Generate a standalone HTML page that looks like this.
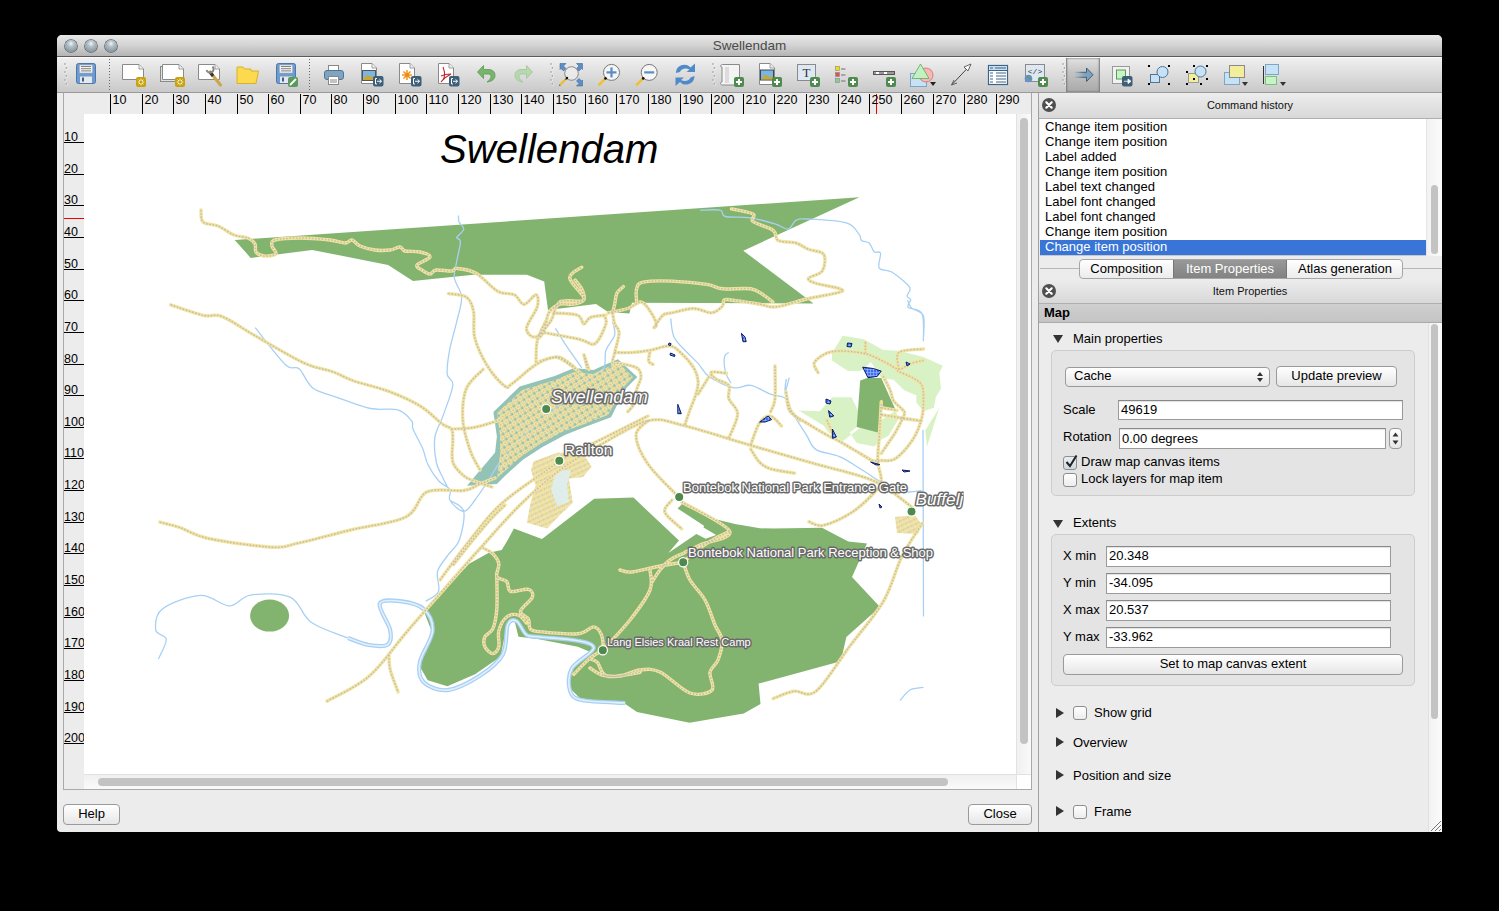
<!DOCTYPE html>
<html><head><meta charset="utf-8">
<style>
*{margin:0;padding:0;box-sizing:border-box}
html,body{width:1499px;height:911px;overflow:hidden;background:#000}
body{position:relative;font-family:"Liberation Sans",sans-serif;font-size:13px;color:#000}
.a{position:absolute}
#win{left:57px;top:35px;width:1385px;height:796px;background:#ececec;border-radius:5px 5px 4px 4px;overflow:hidden}
#title{left:0;top:0;width:1385px;height:22px;background:linear-gradient(#e9e9e9,#d3d3d3 60%,#c2c2c2);border-bottom:1px solid #8f8f8f}
#title span{position:absolute;left:0;width:100%;top:3px;text-align:center;font-size:13.5px;color:#4a4a4a}
.tl{position:absolute;top:4px;width:12px;height:12px;border-radius:50%;background:radial-gradient(circle at 50% 30%,#f2f5f7 0,#b5c1c8 30%,#8a99a3 75%,#6b7a84 100%);box-shadow:0 0 0 0.8px #56616a}
#tb{left:0;top:22px;width:1385px;height:36px;background:linear-gradient(#ececec,#d6d6d6);border-bottom:1px solid #a5a5a5}
.ruler{background:#ececec}
.rt{font-size:12.5px;color:#000;position:absolute;line-height:12px}
.btn{position:absolute;border:1px solid #9a9a9a;border-radius:4px;background:linear-gradient(#fff,#f3f3f3 50%,#e6e6e6);text-align:center;font-size:13px;line-height:18px}
.dtitle{position:absolute;left:1px;width:403px;height:26px;background:linear-gradient(#ededed,#d8d8d8);border-bottom:1px solid #b0b0b0;font-size:11px;text-align:center;line-height:26px;color:#111}
.xcl{position:absolute;left:4px;top:6px;width:14px;height:14px;border-radius:50%;background:#4f4f4f}
.li{position:absolute;left:6px;font-size:13px;line-height:15px;height:15px}
.inp{position:absolute;background:#fff;border:1px solid #9a9a9a;border-top-color:#888;box-shadow:inset 0 1px 1px rgba(0,0,0,.12);font-size:13px;line-height:18px;padding-left:2px}
.lab{position:absolute;font-size:13px;line-height:15px}
.tri-d{position:absolute;width:0;height:0;border-left:5.5px solid transparent;border-right:5.5px solid transparent;border-top:8px solid #333}
.tri-r{position:absolute;width:0;height:0;border-top:5.5px solid transparent;border-bottom:5.5px solid transparent;border-left:8px solid #333}
.cb{position:absolute;width:14px;height:14px;border:1px solid #8e8e8e;border-radius:3px;background:linear-gradient(#fff,#ececec)}
.grp{position:absolute;border:1px solid #cdcdcd;border-radius:5px;background:#e4e4e4}
</style></head><body>
<div class="a" style="left:57px;top:35px;width:1385px;height:797px;background:#ececec;border-radius:5px 5px 4px 4px"></div>
<!-- title bar -->
<div class="a" style="left:57px;top:35px;width:1385px;height:22px;border-radius:5px 5px 0 0;background:linear-gradient(#e8e8e8,#d2d2d2 50%,#b4b4b4);border-bottom:1px solid #5a5a5a"></div>
<div class="a" style="left:57px;top:37px;width:1385px;text-align:center;font-size:13.5px;color:#4a4a4a;line-height:18px">Swellendam</div>
<div class="tl" style="left:65px;top:40px"></div><div class="tl" style="left:85px;top:40px"></div><div class="tl" style="left:105px;top:40px"></div>
<!-- toolbar -->
<div class="a" style="left:57px;top:57px;width:1385px;height:36px;background:linear-gradient(#f0f0f0,#e6e6e6 25%,#c9c9c9);border-top:1px solid #fafafa;border-bottom:1px solid #9a9a9a"></div>
<div class="a" style="left:1066px;top:58px;width:34px;height:34px;background:linear-gradient(#e2e2e2,#c2c2c2 45%,#a9a9a9);box-shadow:inset 1px 0 2px #777,inset -1px 0 2px #777"></div>
<!-- canvas frame -->
<div class="a" style="left:63px;top:93px;width:969px;height:697px;border:1px solid #a9a9a9;border-top:none;background:#ececec"></div>
<div class="a" style="left:84px;top:114px;width:932px;height:660px;background:#fff"></div>
<!-- scrollbars -->
<div class="a" style="left:1016px;top:114px;width:15px;height:660px;background:linear-gradient(90deg,#f0f0f0,#fafafa);border-left:1px solid #e2e2e2"></div>
<div class="a" style="left:1020px;top:118px;width:8px;height:626px;border-radius:4px;background:#c3c3c3"></div>
<div class="a" style="left:84px;top:774px;width:932px;height:15px;background:linear-gradient(#f0f0f0,#fafafa);border-top:1px solid #e2e2e2"></div>
<div class="a" style="left:98px;top:778px;width:850px;height:8px;border-radius:4px;background:#c3c3c3"></div>
<div class="a" style="left:1016px;top:774px;width:15px;height:15px;background:#fff;border-left:1px solid #e2e2e2;border-top:1px solid #e2e2e2"></div>
<!-- red markers -->
<div class="a" style="left:876px;top:94px;width:1px;height:20px;background:#e00"></div>
<div class="a" style="left:64px;top:218px;width:20px;height:1px;background:#e00"></div>
<!-- buttons -->
<div class="btn" style="left:63px;top:804px;width:57px;height:21px">Help</div>
<div class="btn" style="left:968px;top:804px;width:64px;height:21px">Close</div>
<!-- splitter -->
<div class="a" style="left:1038px;top:93px;width:1px;height:739px;background:#a0a0a0"></div>

<div class="a" style="left:110px;top:94px;width:1px;height:20px;background:#000"></div>
<div class="rt" style="left:112.5px;top:94px">10</div>
<div class="a" style="left:142px;top:94px;width:1px;height:20px;background:#000"></div>
<div class="rt" style="left:144.5px;top:94px">20</div>
<div class="a" style="left:173px;top:94px;width:1px;height:20px;background:#000"></div>
<div class="rt" style="left:175.5px;top:94px">30</div>
<div class="a" style="left:205px;top:94px;width:1px;height:20px;background:#000"></div>
<div class="rt" style="left:207.5px;top:94px">40</div>
<div class="a" style="left:237px;top:94px;width:1px;height:20px;background:#000"></div>
<div class="rt" style="left:239.5px;top:94px">50</div>
<div class="a" style="left:268px;top:94px;width:1px;height:20px;background:#000"></div>
<div class="rt" style="left:270.5px;top:94px">60</div>
<div class="a" style="left:300px;top:94px;width:1px;height:20px;background:#000"></div>
<div class="rt" style="left:302.5px;top:94px">70</div>
<div class="a" style="left:331px;top:94px;width:1px;height:20px;background:#000"></div>
<div class="rt" style="left:333.5px;top:94px">80</div>
<div class="a" style="left:363px;top:94px;width:1px;height:20px;background:#000"></div>
<div class="rt" style="left:365.5px;top:94px">90</div>
<div class="a" style="left:395px;top:94px;width:1px;height:20px;background:#000"></div>
<div class="rt" style="left:397.5px;top:94px">100</div>
<div class="a" style="left:426px;top:94px;width:1px;height:20px;background:#000"></div>
<div class="rt" style="left:428.5px;top:94px">110</div>
<div class="a" style="left:458px;top:94px;width:1px;height:20px;background:#000"></div>
<div class="rt" style="left:460.5px;top:94px">120</div>
<div class="a" style="left:490px;top:94px;width:1px;height:20px;background:#000"></div>
<div class="rt" style="left:492.5px;top:94px">130</div>
<div class="a" style="left:521px;top:94px;width:1px;height:20px;background:#000"></div>
<div class="rt" style="left:523.5px;top:94px">140</div>
<div class="a" style="left:553px;top:94px;width:1px;height:20px;background:#000"></div>
<div class="rt" style="left:555.5px;top:94px">150</div>
<div class="a" style="left:585px;top:94px;width:1px;height:20px;background:#000"></div>
<div class="rt" style="left:587.5px;top:94px">160</div>
<div class="a" style="left:616px;top:94px;width:1px;height:20px;background:#000"></div>
<div class="rt" style="left:618.5px;top:94px">170</div>
<div class="a" style="left:648px;top:94px;width:1px;height:20px;background:#000"></div>
<div class="rt" style="left:650.5px;top:94px">180</div>
<div class="a" style="left:680px;top:94px;width:1px;height:20px;background:#000"></div>
<div class="rt" style="left:682.5px;top:94px">190</div>
<div class="a" style="left:711px;top:94px;width:1px;height:20px;background:#000"></div>
<div class="rt" style="left:713.5px;top:94px">200</div>
<div class="a" style="left:743px;top:94px;width:1px;height:20px;background:#000"></div>
<div class="rt" style="left:745.5px;top:94px">210</div>
<div class="a" style="left:774px;top:94px;width:1px;height:20px;background:#000"></div>
<div class="rt" style="left:776.5px;top:94px">220</div>
<div class="a" style="left:806px;top:94px;width:1px;height:20px;background:#000"></div>
<div class="rt" style="left:808.5px;top:94px">230</div>
<div class="a" style="left:838px;top:94px;width:1px;height:20px;background:#000"></div>
<div class="rt" style="left:840.5px;top:94px">240</div>
<div class="a" style="left:869px;top:94px;width:1px;height:20px;background:#000"></div>
<div class="rt" style="left:871.5px;top:94px">250</div>
<div class="a" style="left:901px;top:94px;width:1px;height:20px;background:#000"></div>
<div class="rt" style="left:903.5px;top:94px">260</div>
<div class="a" style="left:933px;top:94px;width:1px;height:20px;background:#000"></div>
<div class="rt" style="left:935.5px;top:94px">270</div>
<div class="a" style="left:964px;top:94px;width:1px;height:20px;background:#000"></div>
<div class="rt" style="left:966.5px;top:94px">280</div>
<div class="a" style="left:996px;top:94px;width:1px;height:20px;background:#000"></div>
<div class="rt" style="left:998.5px;top:94px">290</div>
<div class="a" style="left:63px;top:114px;width:21px;height:660px;overflow:hidden">
<div class="a" style="left:1px;top:28px;width:20px;height:1px;background:#000"></div>
<div class="rt" style="left:1px;top:17px">10</div>
<div class="a" style="left:1px;top:60px;width:20px;height:1px;background:#000"></div>
<div class="rt" style="left:1px;top:49px">20</div>
<div class="a" style="left:1px;top:91px;width:20px;height:1px;background:#000"></div>
<div class="rt" style="left:1px;top:80px">30</div>
<div class="a" style="left:1px;top:123px;width:20px;height:1px;background:#000"></div>
<div class="rt" style="left:1px;top:112px">40</div>
<div class="a" style="left:1px;top:155px;width:20px;height:1px;background:#000"></div>
<div class="rt" style="left:1px;top:144px">50</div>
<div class="a" style="left:1px;top:186px;width:20px;height:1px;background:#000"></div>
<div class="rt" style="left:1px;top:175px">60</div>
<div class="a" style="left:1px;top:218px;width:20px;height:1px;background:#000"></div>
<div class="rt" style="left:1px;top:207px">70</div>
<div class="a" style="left:1px;top:250px;width:20px;height:1px;background:#000"></div>
<div class="rt" style="left:1px;top:239px">80</div>
<div class="a" style="left:1px;top:281px;width:20px;height:1px;background:#000"></div>
<div class="rt" style="left:1px;top:270px">90</div>
<div class="a" style="left:1px;top:313px;width:20px;height:1px;background:#000"></div>
<div class="rt" style="left:1px;top:302px">100</div>
<div class="a" style="left:1px;top:344px;width:20px;height:1px;background:#000"></div>
<div class="rt" style="left:1px;top:333px">110</div>
<div class="a" style="left:1px;top:376px;width:20px;height:1px;background:#000"></div>
<div class="rt" style="left:1px;top:365px">120</div>
<div class="a" style="left:1px;top:408px;width:20px;height:1px;background:#000"></div>
<div class="rt" style="left:1px;top:397px">130</div>
<div class="a" style="left:1px;top:439px;width:20px;height:1px;background:#000"></div>
<div class="rt" style="left:1px;top:428px">140</div>
<div class="a" style="left:1px;top:471px;width:20px;height:1px;background:#000"></div>
<div class="rt" style="left:1px;top:460px">150</div>
<div class="a" style="left:1px;top:503px;width:20px;height:1px;background:#000"></div>
<div class="rt" style="left:1px;top:492px">160</div>
<div class="a" style="left:1px;top:534px;width:20px;height:1px;background:#000"></div>
<div class="rt" style="left:1px;top:523px">170</div>
<div class="a" style="left:1px;top:566px;width:20px;height:1px;background:#000"></div>
<div class="rt" style="left:1px;top:555px">180</div>
<div class="a" style="left:1px;top:598px;width:20px;height:1px;background:#000"></div>
<div class="rt" style="left:1px;top:587px">190</div>
<div class="a" style="left:1px;top:629px;width:20px;height:1px;background:#000"></div>
<div class="rt" style="left:1px;top:618px">200</div>
</div>
<svg class="a" style="left:84px;top:114px" width="932" height="660" viewBox="84 114 932 660">
<defs><pattern id="res" width="6" height="6" patternUnits="userSpaceOnUse" patternTransform="rotate(-32)"><rect x="0" y="0" width="6" height="3.3" fill="#f3e39a"/><rect x="0" y="0" width="3.3" height="6" fill="#f3e39a"/><rect x="1" y="1" width="1.3" height="1.3" fill="#bdbcc0"/><rect x="4.0" y="1" width="1.3" height="1.3" fill="#bdbcc0"/><rect x="1" y="4.0" width="1.3" height="1.3" fill="#bdbcc0"/></pattern></defs>
<path d="M234.7,240.0 L859.4,197.3 L743.3,250.7 L813.5,303.5 L632.0,302.7 L629.4,313.4 L608.0,312.0 L596.0,304.0 L548.0,310.0 L544.2,281.4 L526.9,274.7 L473.5,274.7 L413.0,280.9 L388.1,264.9 L312.1,249.9 L250.7,257.9 Z" fill="#83b46f"/>
<path d="M469.1,563.7 L488.9,552.8 L501.7,549.9 L507.7,540.0 L513.9,528.6 L542.0,539.0 L594.2,498.7 L633.5,497.6 L679.0,540.6 L668.3,552.9 L696.4,534.0 L705.7,538.8 L716.2,534.9 L703.5,527.4 L704.0,525.7 L677.6,508.5 L682.8,503.3 L712.7,518.6 L735.0,524.0 L760.0,528.3 L773.6,528.6 L822.0,527.8 L848.3,541.6 L867.0,543.5 L852.0,577.0 L880.0,607.0 L846.4,636.9 L840.8,661.2 L758.6,683.6 L760.5,704.1 L743.7,713.5 L689.5,722.8 L637.0,711.9 L625.2,704.0 L581.7,700.0 L567.9,686.2 L569.9,670.4 L591.6,652.6 L577.8,646.7 L536.3,638.8 L518.5,636.8 L514.6,621.0 L506.7,624.9 L500.7,656.5 L475.1,674.3 L447.4,686.2 L427.7,680.2 L419.8,666.4 L431.6,630.9 L423.7,611.1 Z" fill="#83b46f"/>
<ellipse cx="269.6" cy="615.6" rx="19.5" ry="16" fill="#83b46f"/>
<path d="M832.0,353.0 L842.7,335.8 L863.8,339.3 L883.1,349.9 L898.9,350.7 L923.5,356.9 L942.8,365.7 L939.3,372.7 L941.0,388.5 L935.8,397.3 L934.0,407.8 L923.5,411.3 L916.4,402.5 L916.4,395.5 L904.2,390.2 L893.6,379.7 L881.3,378.0 L870.8,362.1 L865.5,367.4 L860.2,371.0 L848.0,371.0 L832.0,360.4 Z" fill="#d8f2c6"/><path d="M798.8,410.4 L819.9,411.3 L832.1,397.3 L851.5,397.3 L860.2,414.8 L856.7,427.1 L849.7,432.4 L856.7,442.9 L874.3,446.4 L881.3,439.4 L888.3,435.9 L898.9,418.4 L895.4,411.0 L881.3,420.0 L880.0,432.0 L860.0,428.0 L842.7,441.2 L828.6,432.4 L823.4,425.4 Z" fill="#d8f2c6"/><path d="M939.3,407.8 L925.2,430.6 L927.0,446.4 Z" fill="#d8f2c6"/>
<path d="M860.2,380.6 L867.3,378.0 L881.3,378.0 L888.3,393.8 L895.4,409.6 L881.3,407.8 L877.8,432.4 L856.7,427.1 Z" fill="#83b46f"/>
<path d="M519.7,386.5 L554.8,376.0 L574.1,368.1 L593.5,369.9 L605.7,364.6 L618.0,359.3 L637.3,376.9 L626.8,387.4 L618.0,403.2 L611.0,417.3 L582.9,427.8 L565.4,434.8 L542.5,447.1 L523.2,459.4 L505.7,475.2 L496.9,484.0 L467.0,485.7 L495.1,452.4 L496.9,436.6 L493.4,412.0 Z" fill="#93c3b6"/>
<path d="M158.4,659.0 C159.7,655.7 166.7,644.1 166.3,639.3 C165.9,634.5 156.5,635.1 155.8,630.1 C155.2,625.1 154.9,614.8 162.4,609.0 C169.9,603.2 189.4,595.9 200.6,595.4 C211.8,594.9 221.2,605.9 229.5,605.9 C237.8,605.9 240.5,596.5 250.6,595.1 C260.7,593.7 280.0,592.7 290.1,597.2 C300.2,601.7 301.6,615.4 311.2,622.2 C320.8,629.0 341.9,635.4 348.0,638.0 M450.0,500.5 C452.3,502.3 462.1,504.8 463.7,511.4 C465.2,518.0 462.0,532.6 459.3,540.0 C456.6,547.4 451.0,550.5 447.4,555.8 C443.8,561.1 439.0,565.7 437.5,571.6 C436.0,577.5 440.5,586.5 438.5,591.4 C436.5,596.3 427.8,599.6 425.7,601.2 M255.2,327.6 C260.2,333.8 278.1,357.8 285.4,364.7 C292.7,371.6 294.5,364.9 299.1,368.8 C303.7,372.7 306.4,383.2 312.8,388.0 C319.2,392.8 327.9,394.2 337.5,397.6 C347.1,401.0 360.4,406.4 370.5,408.5 C380.6,410.6 391.0,407.8 397.9,409.9 C404.8,412.0 409.1,417.7 411.6,420.9 C414.1,424.1 411.2,424.5 413.0,429.1 C414.8,433.7 420.1,442.4 422.6,448.3 C425.1,454.2 425.3,459.3 428.0,464.8 C430.7,470.3 435.3,477.1 439.0,481.2 C442.7,485.3 448.2,486.3 450.0,489.5 C451.8,492.7 447.7,496.9 450.0,500.5 C452.3,504.1 459.5,511.5 463.7,511.4 C467.9,511.3 470.6,505.6 475.0,500.0 C479.4,494.4 487.5,481.7 490.0,478.0 M458.5,215.5 C458.6,216.6 458.1,219.8 459.0,222.0 C459.9,224.2 464.0,226.7 463.8,229.0 C463.6,231.3 459.2,234.5 458.0,236.0 C456.8,237.5 456.4,237.0 456.8,238.0 C457.2,239.0 460.4,238.1 460.4,242.0 C460.4,245.9 457.8,255.2 456.8,261.2 C455.8,267.2 453.6,272.0 454.4,278.0 C455.2,284.0 461.2,290.0 461.6,297.2 C462.0,304.4 458.8,312.5 456.8,321.3 C454.8,330.1 451.2,341.3 449.6,350.1 C448.0,358.9 446.7,368.2 447.2,374.1 C447.7,380.0 453.5,378.3 452.8,385.2 C452.1,392.1 446.2,406.7 443.2,415.4 C440.2,424.1 436.0,429.6 434.9,437.4 C433.8,445.2 434.9,455.1 436.3,462.0 C437.7,468.9 441.4,474.4 443.2,478.5 C445.0,482.6 446.6,485.3 447.3,486.7 M555.4,328.3 C557.2,331.2 562.0,339.3 566.4,345.9 C570.8,352.5 579.2,364.1 581.7,367.8 M728.8,352.5 C728.1,353.2 725.0,353.6 724.5,356.9 C724.0,360.2 724.4,367.8 725.5,372.2 C726.6,376.6 730.1,381.4 731.0,383.2 M789.2,377.7 L784.8,394.2 M612.5,321.7 C612.9,323.9 615.8,330.1 614.7,334.9 C613.6,339.7 607.7,344.8 605.9,350.3 C604.1,355.8 606.6,363.1 603.7,367.8 C600.8,372.6 591.6,375.5 588.3,378.8 C585.0,382.1 588.6,383.2 583.9,387.6 C579.2,392.0 569.0,397.9 560.0,405.0 C551.0,412.1 539.2,421.7 530.0,430.0 C520.8,438.3 511.7,447.0 505.0,455.0 C498.3,463.0 492.5,474.2 490.0,478.0 M670.7,318.4 C671.2,321.5 671.6,331.8 674.0,337.1 C676.4,342.4 680.9,345.9 684.9,350.3 C688.9,354.7 694.1,359.0 698.1,363.4 C702.1,367.8 703.2,372.6 709.1,376.6 C715.0,380.6 726.2,386.1 733.2,387.6 C740.2,389.1 744.6,384.3 750.8,385.4 C757.0,386.5 764.8,392.0 770.6,394.2 C776.5,396.4 782.3,395.6 785.9,398.6 C789.5,401.6 788.6,405.9 792.0,412.0 C795.4,418.1 802.5,428.9 806.5,435.2 C810.5,441.5 810.5,446.0 816.1,449.6 C821.7,453.2 832.2,453.3 840.2,456.9 C848.2,460.5 857.0,466.9 864.2,471.3 C871.4,475.7 876.6,479.9 883.4,483.3 C890.2,486.7 898.6,490.5 905.0,491.7 C911.4,492.9 919.0,490.7 921.8,490.5 M786.3,379.0 C786.1,380.8 784.9,386.3 785.0,389.6 C785.1,392.9 786.7,397.4 787.0,399.0 M700.0,210.2 C703.4,210.2 716.0,209.1 720.2,210.2 C724.4,211.2 720.2,215.2 725.2,216.5 C730.2,217.8 742.1,216.5 750.5,217.8 C758.9,219.1 769.4,222.2 775.7,224.1 C782.0,226.0 784.9,229.7 788.3,229.1 C791.7,228.5 792.5,222.0 795.9,220.3 C799.3,218.6 800.1,218.6 808.5,219.0 C816.9,219.4 838.0,220.3 846.4,222.8 C854.8,225.3 856.5,231.2 859.0,234.2 C861.5,237.1 859.8,239.0 861.5,240.5 C863.2,242.0 867.0,241.1 869.1,243.0 C871.2,244.9 872.3,250.1 874.2,251.8 C876.1,253.5 879.7,250.4 880.5,253.1 C881.3,255.8 877.3,265.1 879.2,268.2 C881.1,271.3 886.8,268.8 891.8,272.0 C896.8,275.2 907.0,283.2 909.5,287.2 C912.0,291.2 906.8,293.9 907.0,296.0 C907.2,298.1 910.5,297.9 910.7,299.8 C910.9,301.7 906.3,305.1 908.2,307.4 C910.1,309.7 919.6,308.0 922.1,313.7 C924.6,319.4 923.2,336.8 923.4,341.4 M923.0,430.0 L923.5,616.5 M900.0,700.5 C901.7,698.8 906.1,692.2 910.0,690.0 C913.9,687.8 921.2,687.8 923.5,687.4 M907.5,300.0 C908.2,301.3 908.9,305.3 911.5,307.9 C914.1,310.5 921.3,310.5 923.3,315.8 C925.3,321.1 923.3,335.6 923.3,339.5" fill="none" stroke="#a7d0f5" stroke-width="1.3"/>
<path d="M348.0,638.0 C351.5,639.2 362.4,643.9 369.0,645.0 C375.6,646.1 384.1,647.1 387.6,644.6 C391.1,642.1 391.5,636.9 390.2,630.1 C388.9,623.3 378.1,608.6 379.7,603.8 C381.3,599.0 392.7,600.3 400.0,601.2 C407.3,602.1 418.3,604.2 423.7,609.1 C429.1,614.0 433.2,622.0 432.6,630.9 C432.0,639.8 421.3,654.0 419.8,662.5 C418.3,671.0 419.1,677.6 423.7,682.2 C428.3,686.8 438.2,691.1 447.4,690.1 C456.6,689.1 469.8,682.2 479.0,676.3 C488.2,670.4 497.9,663.1 502.7,654.6 C507.5,646.1 505.4,630.6 507.7,625.0 C510.0,619.4 513.4,619.4 516.5,621.0 C519.6,622.6 522.8,632.2 526.4,634.8 C530.0,637.4 529.7,635.8 538.3,636.8 C546.9,637.8 568.6,638.7 577.8,640.7 C587.0,642.7 594.6,644.0 593.6,648.6 C592.6,653.2 575.9,661.5 571.9,668.4 C567.9,675.3 568.3,684.8 569.9,690.1 C571.5,695.4 572.5,697.9 581.7,700.0 C590.9,702.1 618.0,702.5 625.2,703.0" fill="none" stroke="#a7d0f5" stroke-width="4.2"/><path d="M348.0,638.0 C351.5,639.2 362.4,643.9 369.0,645.0 C375.6,646.1 384.1,647.1 387.6,644.6 C391.1,642.1 391.5,636.9 390.2,630.1 C388.9,623.3 378.1,608.6 379.7,603.8 C381.3,599.0 392.7,600.3 400.0,601.2 C407.3,602.1 418.3,604.2 423.7,609.1 C429.1,614.0 433.2,622.0 432.6,630.9 C432.0,639.8 421.3,654.0 419.8,662.5 C418.3,671.0 419.1,677.6 423.7,682.2 C428.3,686.8 438.2,691.1 447.4,690.1 C456.6,689.1 469.8,682.2 479.0,676.3 C488.2,670.4 497.9,663.1 502.7,654.6 C507.5,646.1 505.4,630.6 507.7,625.0 C510.0,619.4 513.4,619.4 516.5,621.0 C519.6,622.6 522.8,632.2 526.4,634.8 C530.0,637.4 529.7,635.8 538.3,636.8 C546.9,637.8 568.6,638.7 577.8,640.7 C587.0,642.7 594.6,644.0 593.6,648.6 C592.6,653.2 575.9,661.5 571.9,668.4 C567.9,675.3 568.3,684.8 569.9,690.1 C571.5,695.4 572.5,697.9 581.7,700.0 C590.9,702.1 618.0,702.5 625.2,703.0" fill="none" stroke="#e3f0fb" stroke-width="1.6"/>
<defs><pattern id="res2" width="4.6" height="4.6" patternUnits="userSpaceOnUse" patternTransform="rotate(-25)"><rect width="4.6" height="4.6" fill="#dfe6e6"/><rect x="0" y="0" width="4.6" height="3.2" fill="#f3e39a"/><rect x="0" y="0" width="3.2" height="4.6" fill="#f3e39a"/><rect x="1" y="1" width="1.3" height="1.3" fill="#bdbcc0"/><rect x="3.3" y="1" width="1.2" height="1.2" fill="#c8c8c8"/></pattern></defs>
<path d="M522.0,390.0 L555.0,380.0 L574.0,372.0 L593.0,374.0 L606.0,368.0 L618.0,362.0 L633.0,377.0 L624.0,387.0 L615.0,403.0 L608.0,415.0 L582.0,425.0 L562.0,432.0 L540.0,444.0 L522.0,456.0 L506.0,470.0 L497.0,478.0 L500.0,455.0 L500.0,436.0 L497.0,413.0 Z" fill="url(#res)"/>
<path d="M533.7,461.2 L558.3,452.4 L583.0,454.0 L591.7,466.4 L583.0,477.0 L568.9,478.7 L572.8,502.7 L560.0,515.0 L547.0,528.4 L527.0,522.7 L530.0,505.0 L535.6,485.6 L531.0,470.0 Z" fill="url(#res2)"/>
<path d="M895.0,517.0 L915.0,515.0 L922.0,525.0 L918.0,534.0 L897.0,533.0 Z" fill="url(#res2)"/>
<path d="M556,471 L571,470 L567,485 L569,502 L557,506 L551,490 Z" fill="#deeef2" opacity="0.9"/>
<path d="M170.7,304.8 C176.1,306.6 194.5,313.3 203.1,315.3 C211.7,317.3 213.6,313.2 222.3,316.6 C231.0,320.0 241.5,328.0 255.2,335.8 C268.9,343.6 291.8,357.4 304.6,363.3 C317.4,369.2 323.8,368.6 332.0,371.5 C340.2,374.4 344.9,377.8 354.0,381.0 C363.1,384.2 375.9,386.6 386.9,390.7 C397.9,394.8 410.6,400.3 419.8,405.8 C429.0,411.3 436.5,419.7 441.8,423.6 C447.1,427.5 449.6,426.4 451.4,429.1 C453.2,431.8 452.6,434.5 452.8,440.0 C453.0,445.5 451.0,456.0 452.8,462.0 C454.6,468.0 460.1,472.6 463.7,475.8 C467.3,479.0 470.0,479.3 474.7,481.2 C479.4,483.1 489.1,486.0 492.0,487.0 M451.4,429.1 C454.5,428.9 464.6,428.7 470.0,428.0 C475.4,427.3 479.0,426.3 484.0,425.0 C489.0,423.7 497.3,420.8 500.0,420.0 M159.8,522.1 C163.1,523.0 171.4,524.7 179.5,527.4 C187.6,530.1 193.1,535.2 208.5,538.5 C223.9,541.8 256.8,546.4 271.7,547.2 C286.6,548.0 284.8,546.1 298.0,543.2 C311.2,540.3 332.7,534.4 350.7,530.0 C368.7,525.6 393.3,523.2 406.0,516.9 C418.7,510.5 417.3,496.3 427.0,491.9 C436.7,487.5 455.2,491.8 464.0,490.5 C472.8,489.2 474.8,486.1 480.0,484.0 C485.2,481.9 492.5,479.0 495.0,478.0 M327.0,701.2 C334.0,697.0 355.9,687.6 369.1,676.2 C382.3,664.8 393.7,647.1 406.0,632.8 C418.3,618.5 430.6,604.6 442.9,590.6 C455.2,576.6 467.1,562.8 480.0,548.5 C492.9,534.2 506.7,518.1 520.0,505.0 C533.3,491.9 546.7,480.0 560.0,470.0 C573.3,460.0 585.3,453.2 600.0,445.0 C614.7,436.8 634.0,424.0 648.0,420.8 C662.0,417.6 667.2,421.6 684.0,425.6 C700.8,429.6 726.9,438.4 748.9,444.8 C770.9,451.2 795.3,458.1 816.1,464.1 C836.9,470.1 857.8,473.7 873.8,480.9 C889.8,488.1 905.8,502.9 912.2,507.3 M388.9,655.1 C389.1,657.5 388.7,663.5 390.2,669.6 C391.7,675.8 396.8,688.3 398.1,692.0 M440.0,580.0 C445.0,573.3 460.0,552.5 470.0,540.0 C480.0,527.5 488.3,515.8 500.0,505.0 C511.7,494.2 528.3,483.3 540.0,475.0 C551.7,466.7 560.0,460.8 570.0,455.0 C580.0,449.2 587.0,446.5 600.0,440.0 C613.0,433.5 640.0,420.0 648.0,416.0 M201.0,210.0 C201.3,212.0 200.2,219.3 203.0,222.0 C205.8,224.7 212.8,223.8 218.0,226.0 C223.2,228.2 229.0,233.0 234.0,235.0 C239.0,237.0 244.5,236.5 248.0,238.0 C251.5,239.5 253.7,241.7 255.0,244.0 C256.3,246.3 254.5,250.0 256.0,252.0 C257.5,254.0 260.7,255.7 264.0,256.0 C267.3,256.3 274.7,255.7 276.0,254.0 C277.3,252.3 272.2,248.3 272.0,246.0 C271.8,243.7 270.3,241.3 275.0,240.0 C279.7,238.7 290.8,238.0 300.0,238.0 C309.2,238.0 322.5,239.2 330.0,240.0 C337.5,240.8 341.3,243.0 345.0,243.0 C348.7,243.0 349.5,239.5 352.0,240.0 C354.5,240.5 356.2,244.3 360.0,246.0 C363.8,247.7 370.0,249.3 375.0,250.0 C380.0,250.7 385.8,250.5 390.0,250.0 C394.2,249.5 397.5,246.8 400.0,247.0 C402.5,247.2 401.7,250.2 405.0,251.0 C408.3,251.8 415.8,251.0 420.0,252.0 C424.2,253.0 430.5,254.8 430.0,257.0 C429.5,259.2 418.3,262.8 417.0,265.0 C415.7,267.2 419.8,268.5 422.0,270.0 C424.2,271.5 427.7,274.0 430.0,274.0 C432.3,274.0 432.3,270.5 436.0,270.0 C439.7,269.5 448.5,271.3 452.0,271.0 C455.5,270.7 452.8,268.0 456.8,268.4 C460.8,268.8 469.2,269.4 476.0,273.2 C482.8,277.0 491.2,287.6 497.6,291.2 C504.0,294.8 510.0,292.6 514.4,294.8 C518.8,297.0 520.4,304.4 524.0,304.4 C527.6,304.4 533.8,294.4 536.0,294.8 C538.2,295.2 538.9,301.2 537.3,306.8 C535.7,312.4 526.7,323.5 526.5,328.5 C526.3,333.5 532.0,338.1 536.0,336.9 C540.0,335.7 546.5,327.1 550.5,321.3 C554.5,315.5 554.4,305.6 560.0,302.0 C565.6,298.4 582.4,303.6 584.0,299.6 C585.6,295.6 570.1,283.4 569.7,278.0 C569.3,272.6 579.7,269.0 581.7,267.2 M636.6,302.0 C636.6,299.8 635.5,292.1 636.6,288.8 C637.7,285.5 637.3,283.5 643.2,282.2 C649.1,280.9 661.2,280.7 671.8,281.1 C682.4,281.5 698.5,283.1 706.9,284.4 C715.3,285.7 715.0,288.1 722.3,288.8 C729.6,289.5 743.8,287.7 750.8,288.8 C757.8,289.9 760.3,293.2 764.0,295.4 C767.7,297.6 771.3,300.9 772.8,302.0 M608.1,312.9 C611.4,312.2 622.3,310.3 627.8,308.5 C633.3,306.7 637.3,301.6 641.0,302.0 C644.7,302.4 647.2,307.1 649.8,310.7 C652.4,314.3 655.7,321.1 656.4,323.9 C657.1,326.6 653.1,328.7 654.2,327.2 C655.3,325.7 660.1,317.5 663.0,315.1 C665.9,312.7 666.7,314.0 671.8,312.9 C676.9,311.8 687.1,308.5 693.7,308.5 C700.3,308.5 706.5,313.2 711.3,312.9 C716.1,312.5 720.1,308.6 722.3,306.4 C724.5,304.2 722.0,300.7 724.5,299.8 C727.0,298.9 731.8,300.2 737.6,300.9 C743.5,301.6 753.2,303.2 759.6,304.2 C766.0,305.2 768.1,307.8 776.2,306.8 C784.4,305.9 797.9,300.9 808.5,298.5 C819.1,296.1 835.0,293.9 840.0,292.2 C845.0,290.5 842.8,289.9 838.8,288.4 C834.8,286.9 821.1,285.1 816.1,283.4 C811.1,281.7 807.5,280.4 808.5,278.3 C809.5,276.2 819.9,274.8 822.4,270.8 C824.9,266.8 826.0,258.0 823.7,254.4 C821.4,250.8 813.1,251.2 808.5,249.3 C803.9,247.4 800.9,244.5 795.9,243.0 C790.9,241.5 782.0,242.6 778.2,240.5 C774.4,238.4 777.4,233.6 773.2,230.4 C769.0,227.2 756.4,224.2 753.0,221.5 C749.6,218.8 756.6,216.1 753.0,214.0 C749.4,211.9 735.1,209.8 731.5,208.9 M612.5,312.9 C612.9,314.7 613.6,320.6 614.7,323.9 C615.8,327.2 619.1,327.9 619.1,332.7 C619.1,337.5 615.8,347.4 614.7,352.5 C613.6,357.6 611.8,361.6 612.5,363.4 C613.2,365.2 615.1,362.7 619.1,363.4 C623.1,364.1 633.0,365.6 636.6,367.8 C640.2,370.0 641.0,372.9 641.0,376.6 C641.0,380.3 637.7,385.4 636.6,389.8 C635.5,394.2 635.9,399.3 634.4,403.0 C632.9,406.7 628.9,410.3 627.8,411.8 M614.7,352.5 C617.6,352.5 626.4,352.9 632.2,352.5 C638.1,352.1 643.6,351.4 649.8,350.3 C656.0,349.2 664.5,345.5 669.6,345.9 C674.7,346.3 676.5,348.9 680.5,352.5 C684.5,356.1 690.8,363.1 693.7,367.8 C696.6,372.6 697.7,376.6 698.1,381.0 C698.5,385.4 697.4,389.1 695.9,394.2 C694.4,399.3 691.1,406.7 689.3,411.8 C687.5,416.9 685.6,422.7 684.9,424.9 M649.8,352.5 C649.6,353.9 648.2,359.2 648.7,361.2 C649.2,363.2 652.4,363.9 653.1,364.5 M448.4,293.6 C451.4,294.2 462.2,294.2 466.4,297.2 C470.6,300.2 472.2,304.9 473.6,311.7 C475.0,318.5 472.4,328.9 474.8,338.1 C477.2,347.3 483.0,358.9 488.0,366.9 C493.0,374.9 500.8,383.3 504.8,386.1 C508.8,388.9 506.8,387.3 512.0,383.7 C517.2,380.1 528.8,368.9 536.0,364.5 C543.2,360.1 549.7,357.3 555.3,357.3 C560.9,357.3 565.3,361.7 569.7,364.5 C574.1,367.3 579.7,372.5 581.7,374.1 M536.0,362.1 C536.2,358.5 535.7,347.3 537.3,340.5 C538.9,333.7 544.3,324.5 545.7,321.3 M584.0,354.9 L588.9,369.3 M483.2,369.3 C480.4,372.5 469.8,380.1 466.4,388.5 C463.0,396.9 462.2,409.4 462.8,419.7 C463.4,429.9 467.1,441.6 470.0,450.0 C472.9,458.4 478.3,466.7 480.0,470.0 M728.8,438.1 C730.3,434.1 737.6,420.6 737.6,414.0 C737.6,407.4 730.3,403.4 728.8,398.6 C727.3,393.8 731.0,388.7 728.8,385.4 C726.6,382.1 718.6,381.0 715.7,378.8 C712.8,376.6 709.5,373.1 711.3,372.2 C713.1,371.3 724.0,373.1 726.6,373.3 M709.1,376.6 L698.1,394.2 M750.8,444.7 C752.3,441.0 756.3,427.5 759.6,422.7 C762.9,417.9 767.0,415.6 770.6,416.1 C774.2,416.7 779.7,424.4 781.5,426.0 M770.6,411.8 C771.3,409.6 774.3,406.3 775.0,398.6 C775.7,390.9 775.0,371.1 775.0,365.6 M750.8,449.1 C752.3,451.3 756.3,459.0 759.6,462.3 C762.9,465.6 764.8,467.0 770.6,468.8 C776.5,470.6 790.7,472.5 794.7,473.2 M785.9,392.0 C786.6,394.9 787.9,404.9 790.3,409.6 C792.6,414.4 798.4,418.7 800.0,420.5 M575.1,280.0 C576.2,281.5 580.2,285.5 581.7,288.8 C583.2,292.1 585.4,297.2 583.9,299.8 C582.4,302.4 576.9,303.5 572.9,304.2 C568.9,304.9 563.8,302.8 559.8,304.2 C555.8,305.6 551.4,308.5 548.8,312.9 C546.2,317.3 545.9,326.5 544.4,330.5 C542.9,334.5 540.7,336.0 540.0,337.1 M623.4,286.6 C622.3,287.7 618.3,290.3 616.9,293.2 C615.5,296.1 615.4,300.9 614.7,304.2 C614.0,307.5 612.9,311.4 612.5,312.9 M553.2,312.9 C557.2,313.3 572.2,313.3 577.3,315.1 C582.4,316.9 581.7,323.5 583.9,323.9 C586.1,324.3 586.8,318.8 590.5,317.3 C594.2,315.8 603.3,315.5 605.9,315.1 M540.0,361.2 C542.9,360.5 553.2,356.9 557.6,356.9 C562.0,356.9 563.5,359.4 566.4,361.2 C569.3,363.0 573.6,366.7 575.1,367.8 M583.9,354.7 L587.2,367.8 M544.4,332.7 C550.2,333.8 571.1,337.5 579.5,339.3 C587.9,341.1 590.5,346.3 594.9,343.7 C599.3,341.1 604.4,328.7 605.9,323.9 C607.4,319.1 604.1,316.6 603.7,315.1 M648.0,420.8 C646.0,423.2 636.0,428.0 636.0,435.2 C636.0,442.4 640.8,453.7 648.0,464.1 C655.2,474.5 674.1,492.1 679.3,497.7 M672.0,500.0 C670.8,502.0 663.2,507.3 664.8,512.1 C666.4,516.9 678.9,526.1 681.7,528.9 M681.7,502.0 C689.7,506.9 726.7,524.1 729.7,531.3 C732.8,538.5 707.6,541.4 700.0,545.0 C692.4,548.6 689.0,550.4 684.0,552.9 C679.0,555.4 674.0,557.1 670.0,560.0 C666.0,562.9 663.0,566.3 660.0,570.0 C657.0,573.7 653.3,580.0 652.0,582.0 M808.9,521.7 C811.3,522.3 816.1,526.9 823.3,525.3 C830.5,523.7 843.4,517.9 852.2,512.1 C861.0,506.3 871.4,495.9 876.2,490.5 C881.1,485.1 881.0,485.0 881.3,480.0 C881.6,475.0 878.1,468.4 877.8,460.5 C877.5,452.6 879.0,442.2 879.6,432.4 C880.2,422.6 881.0,406.8 881.3,401.7 M786.1,392.0 C786.8,395.2 786.4,406.0 790.0,411.3 C793.6,416.6 801.2,419.5 807.6,423.6 C814.0,427.7 823.3,433.0 828.6,435.9 C833.9,438.8 833.9,438.3 839.2,441.2 C844.5,444.1 854.7,450.3 860.2,453.5 C865.8,456.7 869.0,459.3 872.5,460.5 C876.0,461.7 877.5,460.8 881.3,460.5 C885.1,460.2 890.1,462.2 895.4,458.7 C900.7,455.2 908.5,446.1 912.9,439.4 C917.3,432.7 919.9,425.1 921.7,418.4 C923.5,411.7 923.5,404.6 923.5,399.0 C923.5,393.4 923.5,388.5 921.7,385.0 C919.9,381.5 917.0,380.4 912.9,378.0 C908.8,375.6 899.7,372.1 897.1,370.9 M818.1,372.7 C817.5,370.9 812.3,365.6 814.6,362.1 C816.9,358.6 823.9,353.1 832.1,351.6 C840.3,350.2 855.0,351.6 863.8,353.4 C872.6,355.1 878.9,359.5 884.8,362.1 C890.6,364.7 894.8,368.9 898.9,369.2 C903.0,369.5 905.3,365.4 909.4,363.9 C913.5,362.4 921.1,361.0 923.5,360.4 M898.9,369.2 C898.9,366.4 894.8,355.9 898.9,352.5 C903.0,349.1 919.4,349.6 923.5,349.0 M865.4,342.1 L865.4,352.7 M883.1,376.2 C884.3,378.5 888.4,386.1 890.1,390.2 C891.9,394.3 891.6,397.6 893.6,400.8 C895.6,404.0 900.6,407.3 902.4,409.6 C904.2,411.9 905.4,411.0 904.2,414.8 C903.0,418.6 898.0,427.7 895.4,432.4 C892.8,437.1 890.6,439.5 888.3,443.0 C885.9,446.5 882.5,451.8 881.3,453.5 M881.3,407.8 L897.1,410.4 M881.3,414.8 L921.7,421.0 M826.9,420.1 L833.9,435.9 M900.2,418.4 L920.6,420.8 M922.4,523.2 C919.0,528.8 908.3,543.7 901.8,556.8 C895.3,569.9 891.9,586.7 883.2,601.6 C874.5,616.5 860.8,631.5 849.6,646.4 C838.4,661.3 825.3,683.7 816.0,691.2 C806.7,698.7 800.8,690.0 793.6,691.2 C786.4,692.4 776.4,697.4 773.0,698.6 M683.2,562.2 C686.0,559.8 694.5,552.0 700.0,548.0 C705.5,544.0 711.0,540.8 716.0,538.0 C721.0,535.2 727.4,532.4 729.7,531.3 M683.2,562.2 C679.3,562.8 668.5,564.4 660.0,566.0 C651.5,567.6 638.7,571.3 632.0,572.0 C625.3,572.7 622.0,570.3 620.0,570.0 M650.0,570.0 C650.0,573.3 653.3,581.7 650.0,590.0 C646.7,598.3 637.9,610.0 630.0,620.0 C622.1,630.0 607.3,645.2 602.8,650.3 M683.2,562.2 C684.3,565.2 686.4,573.7 690.0,580.0 C693.6,586.3 700.8,592.5 705.0,600.0 C709.2,607.5 712.2,618.3 715.0,625.0 C717.8,631.7 721.5,634.2 722.0,640.0 C722.5,645.8 720.0,654.7 718.0,660.0 C716.0,665.3 711.0,667.0 710.0,672.0 C709.0,677.0 715.3,686.5 712.0,690.0 C708.7,693.5 698.7,696.0 690.0,693.0 C681.3,690.0 668.3,675.8 660.0,672.0 C651.7,668.2 646.7,669.3 640.0,670.0 C633.3,670.7 626.3,675.2 620.0,676.0 C613.7,676.8 607.0,676.3 602.0,675.0 C597.0,673.7 592.0,669.2 590.0,668.0 M603.5,649.6 C603.2,647.1 603.1,638.6 601.5,634.8 C599.9,631.0 597.6,627.1 593.6,626.9 C589.6,626.7 586.4,633.0 577.8,633.8 C569.2,634.6 550.1,632.7 542.2,631.9 C534.3,631.1 532.7,631.0 530.4,628.9 C528.1,626.8 530.0,622.0 528.4,619.0 C526.8,616.0 519.9,614.7 520.5,611.1 C521.1,607.5 531.0,600.9 532.3,597.3 C533.6,593.7 532.0,590.4 528.4,589.4 C524.8,588.4 514.2,592.7 510.6,591.4 C507.0,590.1 509.0,584.0 506.7,581.5 C504.4,579.0 498.1,579.5 496.8,576.5 C495.5,573.5 499.5,567.5 498.8,563.7 C498.1,559.9 495.4,556.4 492.8,553.8 C490.2,551.2 484.6,548.9 483.0,547.9 M496.8,576.5 C496.8,581.9 497.5,600.4 496.8,609.1 C496.1,617.8 494.8,624.3 492.8,628.9 C490.8,633.5 486.2,633.8 484.9,636.8 C483.6,639.8 483.6,643.9 484.9,646.7 C486.2,649.5 490.5,653.6 492.8,653.6 C495.1,653.6 497.8,650.5 498.8,646.7 C499.8,642.9 497.5,635.9 498.8,630.9 C500.1,625.9 503.4,619.6 506.7,617.0 C510.0,614.4 515.2,614.1 518.5,615.1 C521.8,616.1 525.1,621.7 526.4,623.0 M603.5,649.6 C601.2,651.1 594.6,654.4 589.6,658.5 C584.6,662.6 576.4,671.7 573.8,674.3 M589.6,658.5 C590.9,659.2 594.5,659.5 597.5,662.5 C600.5,665.5 600.3,674.7 607.4,676.3 C614.5,677.9 634.6,673.0 640.0,672.3 M453.3,564.7 C456.6,560.6 466.9,547.5 473.0,540.0 C479.1,532.5 484.7,525.8 490.0,520.0 C495.3,514.2 502.5,507.5 505.0,505.0" fill="none" stroke="#f4e49a" stroke-width="3.4" stroke-linejoin="round" stroke-linecap="round"/>
<path d="M170.7,304.8 C176.1,306.6 194.5,313.3 203.1,315.3 C211.7,317.3 213.6,313.2 222.3,316.6 C231.0,320.0 241.5,328.0 255.2,335.8 C268.9,343.6 291.8,357.4 304.6,363.3 C317.4,369.2 323.8,368.6 332.0,371.5 C340.2,374.4 344.9,377.8 354.0,381.0 C363.1,384.2 375.9,386.6 386.9,390.7 C397.9,394.8 410.6,400.3 419.8,405.8 C429.0,411.3 436.5,419.7 441.8,423.6 C447.1,427.5 449.6,426.4 451.4,429.1 C453.2,431.8 452.6,434.5 452.8,440.0 C453.0,445.5 451.0,456.0 452.8,462.0 C454.6,468.0 460.1,472.6 463.7,475.8 C467.3,479.0 470.0,479.3 474.7,481.2 C479.4,483.1 489.1,486.0 492.0,487.0 M451.4,429.1 C454.5,428.9 464.6,428.7 470.0,428.0 C475.4,427.3 479.0,426.3 484.0,425.0 C489.0,423.7 497.3,420.8 500.0,420.0 M159.8,522.1 C163.1,523.0 171.4,524.7 179.5,527.4 C187.6,530.1 193.1,535.2 208.5,538.5 C223.9,541.8 256.8,546.4 271.7,547.2 C286.6,548.0 284.8,546.1 298.0,543.2 C311.2,540.3 332.7,534.4 350.7,530.0 C368.7,525.6 393.3,523.2 406.0,516.9 C418.7,510.5 417.3,496.3 427.0,491.9 C436.7,487.5 455.2,491.8 464.0,490.5 C472.8,489.2 474.8,486.1 480.0,484.0 C485.2,481.9 492.5,479.0 495.0,478.0 M327.0,701.2 C334.0,697.0 355.9,687.6 369.1,676.2 C382.3,664.8 393.7,647.1 406.0,632.8 C418.3,618.5 430.6,604.6 442.9,590.6 C455.2,576.6 467.1,562.8 480.0,548.5 C492.9,534.2 506.7,518.1 520.0,505.0 C533.3,491.9 546.7,480.0 560.0,470.0 C573.3,460.0 585.3,453.2 600.0,445.0 C614.7,436.8 634.0,424.0 648.0,420.8 C662.0,417.6 667.2,421.6 684.0,425.6 C700.8,429.6 726.9,438.4 748.9,444.8 C770.9,451.2 795.3,458.1 816.1,464.1 C836.9,470.1 857.8,473.7 873.8,480.9 C889.8,488.1 905.8,502.9 912.2,507.3 M388.9,655.1 C389.1,657.5 388.7,663.5 390.2,669.6 C391.7,675.8 396.8,688.3 398.1,692.0 M440.0,580.0 C445.0,573.3 460.0,552.5 470.0,540.0 C480.0,527.5 488.3,515.8 500.0,505.0 C511.7,494.2 528.3,483.3 540.0,475.0 C551.7,466.7 560.0,460.8 570.0,455.0 C580.0,449.2 587.0,446.5 600.0,440.0 C613.0,433.5 640.0,420.0 648.0,416.0 M201.0,210.0 C201.3,212.0 200.2,219.3 203.0,222.0 C205.8,224.7 212.8,223.8 218.0,226.0 C223.2,228.2 229.0,233.0 234.0,235.0 C239.0,237.0 244.5,236.5 248.0,238.0 C251.5,239.5 253.7,241.7 255.0,244.0 C256.3,246.3 254.5,250.0 256.0,252.0 C257.5,254.0 260.7,255.7 264.0,256.0 C267.3,256.3 274.7,255.7 276.0,254.0 C277.3,252.3 272.2,248.3 272.0,246.0 C271.8,243.7 270.3,241.3 275.0,240.0 C279.7,238.7 290.8,238.0 300.0,238.0 C309.2,238.0 322.5,239.2 330.0,240.0 C337.5,240.8 341.3,243.0 345.0,243.0 C348.7,243.0 349.5,239.5 352.0,240.0 C354.5,240.5 356.2,244.3 360.0,246.0 C363.8,247.7 370.0,249.3 375.0,250.0 C380.0,250.7 385.8,250.5 390.0,250.0 C394.2,249.5 397.5,246.8 400.0,247.0 C402.5,247.2 401.7,250.2 405.0,251.0 C408.3,251.8 415.8,251.0 420.0,252.0 C424.2,253.0 430.5,254.8 430.0,257.0 C429.5,259.2 418.3,262.8 417.0,265.0 C415.7,267.2 419.8,268.5 422.0,270.0 C424.2,271.5 427.7,274.0 430.0,274.0 C432.3,274.0 432.3,270.5 436.0,270.0 C439.7,269.5 448.5,271.3 452.0,271.0 C455.5,270.7 452.8,268.0 456.8,268.4 C460.8,268.8 469.2,269.4 476.0,273.2 C482.8,277.0 491.2,287.6 497.6,291.2 C504.0,294.8 510.0,292.6 514.4,294.8 C518.8,297.0 520.4,304.4 524.0,304.4 C527.6,304.4 533.8,294.4 536.0,294.8 C538.2,295.2 538.9,301.2 537.3,306.8 C535.7,312.4 526.7,323.5 526.5,328.5 C526.3,333.5 532.0,338.1 536.0,336.9 C540.0,335.7 546.5,327.1 550.5,321.3 C554.5,315.5 554.4,305.6 560.0,302.0 C565.6,298.4 582.4,303.6 584.0,299.6 C585.6,295.6 570.1,283.4 569.7,278.0 C569.3,272.6 579.7,269.0 581.7,267.2 M636.6,302.0 C636.6,299.8 635.5,292.1 636.6,288.8 C637.7,285.5 637.3,283.5 643.2,282.2 C649.1,280.9 661.2,280.7 671.8,281.1 C682.4,281.5 698.5,283.1 706.9,284.4 C715.3,285.7 715.0,288.1 722.3,288.8 C729.6,289.5 743.8,287.7 750.8,288.8 C757.8,289.9 760.3,293.2 764.0,295.4 C767.7,297.6 771.3,300.9 772.8,302.0 M608.1,312.9 C611.4,312.2 622.3,310.3 627.8,308.5 C633.3,306.7 637.3,301.6 641.0,302.0 C644.7,302.4 647.2,307.1 649.8,310.7 C652.4,314.3 655.7,321.1 656.4,323.9 C657.1,326.6 653.1,328.7 654.2,327.2 C655.3,325.7 660.1,317.5 663.0,315.1 C665.9,312.7 666.7,314.0 671.8,312.9 C676.9,311.8 687.1,308.5 693.7,308.5 C700.3,308.5 706.5,313.2 711.3,312.9 C716.1,312.5 720.1,308.6 722.3,306.4 C724.5,304.2 722.0,300.7 724.5,299.8 C727.0,298.9 731.8,300.2 737.6,300.9 C743.5,301.6 753.2,303.2 759.6,304.2 C766.0,305.2 768.1,307.8 776.2,306.8 C784.4,305.9 797.9,300.9 808.5,298.5 C819.1,296.1 835.0,293.9 840.0,292.2 C845.0,290.5 842.8,289.9 838.8,288.4 C834.8,286.9 821.1,285.1 816.1,283.4 C811.1,281.7 807.5,280.4 808.5,278.3 C809.5,276.2 819.9,274.8 822.4,270.8 C824.9,266.8 826.0,258.0 823.7,254.4 C821.4,250.8 813.1,251.2 808.5,249.3 C803.9,247.4 800.9,244.5 795.9,243.0 C790.9,241.5 782.0,242.6 778.2,240.5 C774.4,238.4 777.4,233.6 773.2,230.4 C769.0,227.2 756.4,224.2 753.0,221.5 C749.6,218.8 756.6,216.1 753.0,214.0 C749.4,211.9 735.1,209.8 731.5,208.9 M612.5,312.9 C612.9,314.7 613.6,320.6 614.7,323.9 C615.8,327.2 619.1,327.9 619.1,332.7 C619.1,337.5 615.8,347.4 614.7,352.5 C613.6,357.6 611.8,361.6 612.5,363.4 C613.2,365.2 615.1,362.7 619.1,363.4 C623.1,364.1 633.0,365.6 636.6,367.8 C640.2,370.0 641.0,372.9 641.0,376.6 C641.0,380.3 637.7,385.4 636.6,389.8 C635.5,394.2 635.9,399.3 634.4,403.0 C632.9,406.7 628.9,410.3 627.8,411.8 M614.7,352.5 C617.6,352.5 626.4,352.9 632.2,352.5 C638.1,352.1 643.6,351.4 649.8,350.3 C656.0,349.2 664.5,345.5 669.6,345.9 C674.7,346.3 676.5,348.9 680.5,352.5 C684.5,356.1 690.8,363.1 693.7,367.8 C696.6,372.6 697.7,376.6 698.1,381.0 C698.5,385.4 697.4,389.1 695.9,394.2 C694.4,399.3 691.1,406.7 689.3,411.8 C687.5,416.9 685.6,422.7 684.9,424.9 M649.8,352.5 C649.6,353.9 648.2,359.2 648.7,361.2 C649.2,363.2 652.4,363.9 653.1,364.5 M448.4,293.6 C451.4,294.2 462.2,294.2 466.4,297.2 C470.6,300.2 472.2,304.9 473.6,311.7 C475.0,318.5 472.4,328.9 474.8,338.1 C477.2,347.3 483.0,358.9 488.0,366.9 C493.0,374.9 500.8,383.3 504.8,386.1 C508.8,388.9 506.8,387.3 512.0,383.7 C517.2,380.1 528.8,368.9 536.0,364.5 C543.2,360.1 549.7,357.3 555.3,357.3 C560.9,357.3 565.3,361.7 569.7,364.5 C574.1,367.3 579.7,372.5 581.7,374.1 M536.0,362.1 C536.2,358.5 535.7,347.3 537.3,340.5 C538.9,333.7 544.3,324.5 545.7,321.3 M584.0,354.9 L588.9,369.3 M483.2,369.3 C480.4,372.5 469.8,380.1 466.4,388.5 C463.0,396.9 462.2,409.4 462.8,419.7 C463.4,429.9 467.1,441.6 470.0,450.0 C472.9,458.4 478.3,466.7 480.0,470.0 M728.8,438.1 C730.3,434.1 737.6,420.6 737.6,414.0 C737.6,407.4 730.3,403.4 728.8,398.6 C727.3,393.8 731.0,388.7 728.8,385.4 C726.6,382.1 718.6,381.0 715.7,378.8 C712.8,376.6 709.5,373.1 711.3,372.2 C713.1,371.3 724.0,373.1 726.6,373.3 M709.1,376.6 L698.1,394.2 M750.8,444.7 C752.3,441.0 756.3,427.5 759.6,422.7 C762.9,417.9 767.0,415.6 770.6,416.1 C774.2,416.7 779.7,424.4 781.5,426.0 M770.6,411.8 C771.3,409.6 774.3,406.3 775.0,398.6 C775.7,390.9 775.0,371.1 775.0,365.6 M750.8,449.1 C752.3,451.3 756.3,459.0 759.6,462.3 C762.9,465.6 764.8,467.0 770.6,468.8 C776.5,470.6 790.7,472.5 794.7,473.2 M785.9,392.0 C786.6,394.9 787.9,404.9 790.3,409.6 C792.6,414.4 798.4,418.7 800.0,420.5 M575.1,280.0 C576.2,281.5 580.2,285.5 581.7,288.8 C583.2,292.1 585.4,297.2 583.9,299.8 C582.4,302.4 576.9,303.5 572.9,304.2 C568.9,304.9 563.8,302.8 559.8,304.2 C555.8,305.6 551.4,308.5 548.8,312.9 C546.2,317.3 545.9,326.5 544.4,330.5 C542.9,334.5 540.7,336.0 540.0,337.1 M623.4,286.6 C622.3,287.7 618.3,290.3 616.9,293.2 C615.5,296.1 615.4,300.9 614.7,304.2 C614.0,307.5 612.9,311.4 612.5,312.9 M553.2,312.9 C557.2,313.3 572.2,313.3 577.3,315.1 C582.4,316.9 581.7,323.5 583.9,323.9 C586.1,324.3 586.8,318.8 590.5,317.3 C594.2,315.8 603.3,315.5 605.9,315.1 M540.0,361.2 C542.9,360.5 553.2,356.9 557.6,356.9 C562.0,356.9 563.5,359.4 566.4,361.2 C569.3,363.0 573.6,366.7 575.1,367.8 M583.9,354.7 L587.2,367.8 M544.4,332.7 C550.2,333.8 571.1,337.5 579.5,339.3 C587.9,341.1 590.5,346.3 594.9,343.7 C599.3,341.1 604.4,328.7 605.9,323.9 C607.4,319.1 604.1,316.6 603.7,315.1 M648.0,420.8 C646.0,423.2 636.0,428.0 636.0,435.2 C636.0,442.4 640.8,453.7 648.0,464.1 C655.2,474.5 674.1,492.1 679.3,497.7 M672.0,500.0 C670.8,502.0 663.2,507.3 664.8,512.1 C666.4,516.9 678.9,526.1 681.7,528.9 M681.7,502.0 C689.7,506.9 726.7,524.1 729.7,531.3 C732.8,538.5 707.6,541.4 700.0,545.0 C692.4,548.6 689.0,550.4 684.0,552.9 C679.0,555.4 674.0,557.1 670.0,560.0 C666.0,562.9 663.0,566.3 660.0,570.0 C657.0,573.7 653.3,580.0 652.0,582.0 M808.9,521.7 C811.3,522.3 816.1,526.9 823.3,525.3 C830.5,523.7 843.4,517.9 852.2,512.1 C861.0,506.3 871.4,495.9 876.2,490.5 C881.1,485.1 881.0,485.0 881.3,480.0 C881.6,475.0 878.1,468.4 877.8,460.5 C877.5,452.6 879.0,442.2 879.6,432.4 C880.2,422.6 881.0,406.8 881.3,401.7 M786.1,392.0 C786.8,395.2 786.4,406.0 790.0,411.3 C793.6,416.6 801.2,419.5 807.6,423.6 C814.0,427.7 823.3,433.0 828.6,435.9 C833.9,438.8 833.9,438.3 839.2,441.2 C844.5,444.1 854.7,450.3 860.2,453.5 C865.8,456.7 869.0,459.3 872.5,460.5 C876.0,461.7 877.5,460.8 881.3,460.5 C885.1,460.2 890.1,462.2 895.4,458.7 C900.7,455.2 908.5,446.1 912.9,439.4 C917.3,432.7 919.9,425.1 921.7,418.4 C923.5,411.7 923.5,404.6 923.5,399.0 C923.5,393.4 923.5,388.5 921.7,385.0 C919.9,381.5 917.0,380.4 912.9,378.0 C908.8,375.6 899.7,372.1 897.1,370.9 M818.1,372.7 C817.5,370.9 812.3,365.6 814.6,362.1 C816.9,358.6 823.9,353.1 832.1,351.6 C840.3,350.2 855.0,351.6 863.8,353.4 C872.6,355.1 878.9,359.5 884.8,362.1 C890.6,364.7 894.8,368.9 898.9,369.2 C903.0,369.5 905.3,365.4 909.4,363.9 C913.5,362.4 921.1,361.0 923.5,360.4 M898.9,369.2 C898.9,366.4 894.8,355.9 898.9,352.5 C903.0,349.1 919.4,349.6 923.5,349.0 M865.4,342.1 L865.4,352.7 M883.1,376.2 C884.3,378.5 888.4,386.1 890.1,390.2 C891.9,394.3 891.6,397.6 893.6,400.8 C895.6,404.0 900.6,407.3 902.4,409.6 C904.2,411.9 905.4,411.0 904.2,414.8 C903.0,418.6 898.0,427.7 895.4,432.4 C892.8,437.1 890.6,439.5 888.3,443.0 C885.9,446.5 882.5,451.8 881.3,453.5 M881.3,407.8 L897.1,410.4 M881.3,414.8 L921.7,421.0 M826.9,420.1 L833.9,435.9 M900.2,418.4 L920.6,420.8 M922.4,523.2 C919.0,528.8 908.3,543.7 901.8,556.8 C895.3,569.9 891.9,586.7 883.2,601.6 C874.5,616.5 860.8,631.5 849.6,646.4 C838.4,661.3 825.3,683.7 816.0,691.2 C806.7,698.7 800.8,690.0 793.6,691.2 C786.4,692.4 776.4,697.4 773.0,698.6 M683.2,562.2 C686.0,559.8 694.5,552.0 700.0,548.0 C705.5,544.0 711.0,540.8 716.0,538.0 C721.0,535.2 727.4,532.4 729.7,531.3 M683.2,562.2 C679.3,562.8 668.5,564.4 660.0,566.0 C651.5,567.6 638.7,571.3 632.0,572.0 C625.3,572.7 622.0,570.3 620.0,570.0 M650.0,570.0 C650.0,573.3 653.3,581.7 650.0,590.0 C646.7,598.3 637.9,610.0 630.0,620.0 C622.1,630.0 607.3,645.2 602.8,650.3 M683.2,562.2 C684.3,565.2 686.4,573.7 690.0,580.0 C693.6,586.3 700.8,592.5 705.0,600.0 C709.2,607.5 712.2,618.3 715.0,625.0 C717.8,631.7 721.5,634.2 722.0,640.0 C722.5,645.8 720.0,654.7 718.0,660.0 C716.0,665.3 711.0,667.0 710.0,672.0 C709.0,677.0 715.3,686.5 712.0,690.0 C708.7,693.5 698.7,696.0 690.0,693.0 C681.3,690.0 668.3,675.8 660.0,672.0 C651.7,668.2 646.7,669.3 640.0,670.0 C633.3,670.7 626.3,675.2 620.0,676.0 C613.7,676.8 607.0,676.3 602.0,675.0 C597.0,673.7 592.0,669.2 590.0,668.0 M603.5,649.6 C603.2,647.1 603.1,638.6 601.5,634.8 C599.9,631.0 597.6,627.1 593.6,626.9 C589.6,626.7 586.4,633.0 577.8,633.8 C569.2,634.6 550.1,632.7 542.2,631.9 C534.3,631.1 532.7,631.0 530.4,628.9 C528.1,626.8 530.0,622.0 528.4,619.0 C526.8,616.0 519.9,614.7 520.5,611.1 C521.1,607.5 531.0,600.9 532.3,597.3 C533.6,593.7 532.0,590.4 528.4,589.4 C524.8,588.4 514.2,592.7 510.6,591.4 C507.0,590.1 509.0,584.0 506.7,581.5 C504.4,579.0 498.1,579.5 496.8,576.5 C495.5,573.5 499.5,567.5 498.8,563.7 C498.1,559.9 495.4,556.4 492.8,553.8 C490.2,551.2 484.6,548.9 483.0,547.9 M496.8,576.5 C496.8,581.9 497.5,600.4 496.8,609.1 C496.1,617.8 494.8,624.3 492.8,628.9 C490.8,633.5 486.2,633.8 484.9,636.8 C483.6,639.8 483.6,643.9 484.9,646.7 C486.2,649.5 490.5,653.6 492.8,653.6 C495.1,653.6 497.8,650.5 498.8,646.7 C499.8,642.9 497.5,635.9 498.8,630.9 C500.1,625.9 503.4,619.6 506.7,617.0 C510.0,614.4 515.2,614.1 518.5,615.1 C521.8,616.1 525.1,621.7 526.4,623.0 M603.5,649.6 C601.2,651.1 594.6,654.4 589.6,658.5 C584.6,662.6 576.4,671.7 573.8,674.3 M589.6,658.5 C590.9,659.2 594.5,659.5 597.5,662.5 C600.5,665.5 600.3,674.7 607.4,676.3 C614.5,677.9 634.6,673.0 640.0,672.3 M453.3,564.7 C456.6,560.6 466.9,547.5 473.0,540.0 C479.1,532.5 484.7,525.8 490.0,520.0 C495.3,514.2 502.5,507.5 505.0,505.0" fill="none" stroke="#bdbcc0" stroke-width="1.5" stroke-dasharray="1.6 1.6"/>
<defs><pattern id="wp" width="3" height="3" patternUnits="userSpaceOnUse"><rect width="3" height="3" fill="#3f6ff0"/><path d="M0,0.5 H3 M0.5,0 V3" stroke="#9fc0ff" stroke-width="0.6"/></pattern></defs>
<path d="M862.7,367.2 L873.3,368.5 L881.2,371.1 L877.2,376.4 L868.0,377.7 Z" fill="url(#wp)" stroke="#0a1a60" stroke-width="1" stroke-linejoin="round"/>
<path d="M741.4,333.3 L745.0,336.9 L746.2,341.7 L743.0,341.7 Z" fill="url(#wp)" stroke="#0a1a60" stroke-width="1" stroke-linejoin="round"/>
<path d="M677.8,404.3 L681.3,413.7 L677.8,413.7 Z" fill="url(#wp)" stroke="#0a1a60" stroke-width="1" stroke-linejoin="round"/>
<path d="M669.0,343.0 L671.0,343.5 L670.5,345.5 L668.5,345.0 Z" fill="url(#wp)" stroke="#0a1a60" stroke-width="1" stroke-linejoin="round"/>
<path d="M670.5,353.0 L675.0,355.0 L674.5,356.5 L670.0,355.0 Z" fill="url(#wp)" stroke="#0a1a60" stroke-width="1" stroke-linejoin="round"/>
<path d="M826.0,399.0 L831.0,401.0 L830.0,404.0 L826.0,403.0 Z" fill="url(#wp)" stroke="#0a1a60" stroke-width="1" stroke-linejoin="round"/>
<path d="M828.5,410.6 L833.8,415.9 L829.8,417.2 Z" fill="url(#wp)" stroke="#0a1a60" stroke-width="1" stroke-linejoin="round"/>
<path d="M832.4,429.1 L836.4,437.0 L832.4,438.3 Z" fill="url(#wp)" stroke="#0a1a60" stroke-width="1" stroke-linejoin="round"/>
<path d="M759.7,422.0 L768.1,416.0 L771.7,419.6 L765.0,422.0 Z" fill="url(#wp)" stroke="#0a1a60" stroke-width="1" stroke-linejoin="round"/>
<path d="M906.0,362.0 L910.0,364.0 L907.0,366.0 Z" fill="url(#wp)" stroke="#0a1a60" stroke-width="1" stroke-linejoin="round"/>
<path d="M870.6,462.0 L879.9,464.6 L876.0,465.0 Z" fill="url(#wp)" stroke="#0a1a60" stroke-width="1" stroke-linejoin="round"/>
<path d="M902.0,470.0 L910.0,471.0 L904.0,472.0 Z" fill="url(#wp)" stroke="#0a1a60" stroke-width="1" stroke-linejoin="round"/>
<path d="M879.0,504.0 L882.0,507.0 L880.0,508.0 Z" fill="url(#wp)" stroke="#0a1a60" stroke-width="1" stroke-linejoin="round"/>
<path d="M847.5,343.0 L852.0,343.5 L851.0,347.0 L847.0,346.5 Z" fill="url(#wp)" stroke="#0a1a60" stroke-width="1" stroke-linejoin="round"/>
<text x="551" y="403" font-size="17.8" font-style="italic" font-family="Liberation Sans" fill="#fff" stroke="#6a6a6a" stroke-width="3" paint-order="stroke" stroke-linejoin="round">Swellendam</text>
<text x="564" y="455" font-size="15.5" font-family="Liberation Sans" fill="#fff" stroke="#6a6a6a" stroke-width="3" paint-order="stroke" stroke-linejoin="round">Railton</text>
<text x="683" y="492" font-size="13" font-family="Liberation Sans" fill="#fff" stroke="#6a6a6a" stroke-width="3" paint-order="stroke" stroke-linejoin="round">Bontebok National Park Entrance Gate</text>
<text x="688" y="557" font-size="13" font-family="Liberation Sans" fill="#fff" stroke="#6a6a6a" stroke-width="3" paint-order="stroke" stroke-linejoin="round">Bontebok National Park Reception &amp; Shop</text>
<text x="607" y="646" font-size="11" font-family="Liberation Sans" fill="#fff" stroke="#6a6a6a" stroke-width="3" paint-order="stroke" stroke-linejoin="round">Lang Elsies Kraal Rest Camp</text>
<clipPath id="mclip"><rect x="84" y="114" width="879.7" height="660"/></clipPath>
<text x="915.5" y="504.6" font-size="17.2" font-style="italic" clip-path="url(#mclip)" font-family="Liberation Sans" fill="#fff" stroke="#6a6a6a" stroke-width="3" paint-order="stroke" stroke-linejoin="round">Buffelj</text>
<circle cx="546.2" cy="409" r="4.6" fill="#4e8a4e" stroke="#fff" stroke-width="1.2"/>
<circle cx="559.3" cy="460.7" r="4.6" fill="#4e8a4e" stroke="#fff" stroke-width="1.2"/>
<circle cx="679.2" cy="497" r="4.6" fill="#4e8a4e" stroke="#fff" stroke-width="1.2"/>
<circle cx="683.2" cy="562.2" r="4.6" fill="#4e8a4e" stroke="#fff" stroke-width="1.2"/>
<circle cx="602.8" cy="650.3" r="4.6" fill="#4e8a4e" stroke="#fff" stroke-width="1.2"/>
<circle cx="911.5" cy="511.6" r="4.6" fill="#4e8a4e" stroke="#fff" stroke-width="1.2"/>
<text x="440" y="163" font-family="Liberation Sans" font-size="40" font-style="italic" fill="#000" textLength="218.5" lengthAdjust="spacingAndGlyphs">Swellendam</text>
</svg>
<svg class="a" style="left:57px;top:57px" width="1385" height="36" viewBox="57 57 1385 36">
<circle cx="65.4" cy="64.4" r="1.1" fill="#fff"/><circle cx="65" cy="64" r="0.9" fill="#a8a8a8"/>
<circle cx="66.9" cy="68.4" r="1.1" fill="#fff"/><circle cx="66.5" cy="68" r="0.9" fill="#a8a8a8"/>
<circle cx="65.4" cy="72.4" r="1.1" fill="#fff"/><circle cx="65" cy="72" r="0.9" fill="#a8a8a8"/>
<circle cx="66.9" cy="76.4" r="1.1" fill="#fff"/><circle cx="66.5" cy="76" r="0.9" fill="#a8a8a8"/>
<circle cx="65.4" cy="80.4" r="1.1" fill="#fff"/><circle cx="65" cy="80" r="0.9" fill="#a8a8a8"/>
<circle cx="66.9" cy="84.4" r="1.1" fill="#fff"/><circle cx="66.5" cy="84" r="0.9" fill="#a8a8a8"/>
<rect x="76.5" y="63.5" width="19" height="20" rx="2" fill="#6d9bd1" stroke="#4a78ac"/>
<rect x="79.5" y="65" width="13" height="8" fill="#f0f0f0" stroke="#aaa" stroke-width="0.5"/>
<line x1="81" y1="66.5" x2="91" y2="66.5" stroke="#555" stroke-width="0.7"/>
<line x1="81" y1="68.7" x2="91" y2="68.7" stroke="#555" stroke-width="0.7"/>
<line x1="81" y1="70.9" x2="91" y2="70.9" stroke="#555" stroke-width="0.7"/>
<rect x="80" y="76.5" width="12" height="6.5" fill="#e8e8e8"/>
<rect x="82" y="77.5" width="2" height="4" fill="#3a5f90"/>
<line x1="109.5" y1="59" x2="109.5" y2="91" stroke="#666" stroke-width="1" stroke-dasharray="1 2"/>
<path d="M122.5,64.5 H139 L143.5,69 V79.5 H122.5 Z" fill="#fff" stroke="#8a8a8a"/>
<path d="M139,64.5 V69 H143.5" fill="#eee" stroke="#8a8a8a" stroke-width="0.8"/>
<rect x="136" y="77" width="10" height="10" rx="2" fill="#c9a20a"/>
<line x1="137.70" y1="82.00" x2="144.30" y2="82.00" stroke="#fff" stroke-width="0.9"/>
<line x1="138.67" y1="79.67" x2="143.33" y2="84.33" stroke="#fff" stroke-width="0.9"/>
<line x1="141.00" y1="78.70" x2="141.00" y2="85.30" stroke="#fff" stroke-width="0.9"/>
<line x1="143.33" y1="79.67" x2="138.67" y2="84.33" stroke="#fff" stroke-width="0.9"/>
<circle cx="141" cy="82" r="1.2" fill="#c9a20a"/>
<rect x="160.5" y="66.5" width="21" height="15" fill="#e0e0e0" stroke="#8a8a8a"/>
<path d="M162.5,64.5 H179 L183.5,69 V79.5 H162.5 Z" fill="#fff" stroke="#8a8a8a"/>
<path d="M179,64.5 V69 H183.5" fill="#eee" stroke="#8a8a8a" stroke-width="0.8"/>
<rect x="175" y="77" width="10" height="10" rx="2" fill="#c9a20a"/>
<line x1="176.70" y1="82.00" x2="183.30" y2="82.00" stroke="#fff" stroke-width="0.9"/>
<line x1="177.67" y1="79.67" x2="182.33" y2="84.33" stroke="#fff" stroke-width="0.9"/>
<line x1="180.00" y1="78.70" x2="180.00" y2="85.30" stroke="#fff" stroke-width="0.9"/>
<line x1="182.33" y1="79.67" x2="177.67" y2="84.33" stroke="#fff" stroke-width="0.9"/>
<circle cx="180" cy="82" r="1.2" fill="#c9a20a"/>
<path d="M198.5,64.5 H215 L219.5,69 V79.5 H198.5 Z" fill="#fff" stroke="#8a8a8a"/>
<path d="M215,64.5 V69 H219.5" fill="#eee" stroke="#8a8a8a" stroke-width="0.8"/>
<path d="M210,72 L220.5,85" stroke="#caa84a" stroke-width="3.2" stroke-linecap="round"/><path d="M210,72 L213,76" stroke="#333" stroke-width="3"/>
<path d="M206.5,70 a3.6,3.6 0 1 0 6,-3.5" fill="none" stroke="#888" stroke-width="2"/>
<path d="M237,67 H243 L244.5,69 H251 V71 H258.5 L256,83.5 H237 Z" fill="#fdd94e" stroke="#d4b22e"/>
<rect x="276.5" y="63.5" width="19" height="20" rx="2" fill="#6d9bd1" stroke="#4a78ac"/>
<rect x="279.5" y="65" width="13" height="8" fill="#f0f0f0" stroke="#aaa" stroke-width="0.5"/>
<line x1="281" y1="66.5" x2="291" y2="66.5" stroke="#555" stroke-width="0.7"/>
<line x1="281" y1="68.7" x2="291" y2="68.7" stroke="#555" stroke-width="0.7"/>
<line x1="281" y1="70.9" x2="291" y2="70.9" stroke="#555" stroke-width="0.7"/>
<rect x="280" y="76.5" width="12" height="6.5" fill="#e8e8e8"/>
<rect x="282" y="77.5" width="2" height="4" fill="#3a5f90"/>
<rect x="288" y="77" width="10" height="10" rx="2" fill="#5b9a5b"/><path d="M290.5,84.5 L295.5,79.5" stroke="#fff" stroke-width="1.8" stroke-linecap="round"/>
<line x1="309.5" y1="59" x2="309.5" y2="91" stroke="#666" stroke-width="1" stroke-dasharray="1 2"/>
<rect x="328.5" y="65.5" width="10" height="8" fill="#fff" stroke="#888"/>
<rect x="324.5" y="70.5" width="19" height="9" rx="2.5" fill="#7fa3c0" stroke="#4f7594"/>
<rect x="328.5" y="76.5" width="10" height="8" fill="#fff" stroke="#888"/><line x1="330" y1="80" x2="337" y2="80" stroke="#888"/><line x1="330" y1="82" x2="337" y2="82" stroke="#888"/>
<path d="M361.5,63.5 H372 L376.5,68 V83.5 H361.5 Z" fill="#fff" stroke="#8a8a8a"/>
<path d="M372,63.5 V68 H376.5" fill="#eee" stroke="#8a8a8a" stroke-width="0.8"/>
<rect x="362.5" y="70.5" width="13" height="10" fill="#79b6e8" stroke="#555"/><path d="M363,79.5 L367,74.5 L372,77 L375,76 V80 H363Z" fill="#c8a838"/>
<rect x="373" y="76" width="10.5" height="10.5" rx="2" fill="#3e5f78"/>
<path d="M377,78.5 H375.5 V84 H377 M377,81.25 H381.5 M379.5,79.3 L381.5,81.25 L379.5,83.2" stroke="#fff" stroke-width="1" fill="none"/>
<path d="M399.5,63.5 H410 L414.5,68 V83.5 H399.5 Z" fill="#fff" stroke="#8a8a8a"/>
<path d="M410,63.5 V68 H414.5" fill="#eee" stroke="#8a8a8a" stroke-width="0.8"/>
<g stroke="#f08c10" stroke-width="1.4"><line x1="402" y1="75" x2="412" y2="75"/><line x1="407" y1="70" x2="407" y2="80"/><line x1="403.5" y1="71.5" x2="410.5" y2="78.5"/><line x1="410.5" y1="71.5" x2="403.5" y2="78.5"/></g><circle cx="407" cy="75" r="2" fill="#f08c10"/>
<rect x="411" y="76" width="10.5" height="10.5" rx="2" fill="#3e5f78"/>
<path d="M415,78.5 H413.5 V84 H415 M415,81.25 H419.5 M417.5,79.3 L419.5,81.25 L417.5,83.2" stroke="#fff" stroke-width="1" fill="none"/>
<path d="M438.5,63.5 H449 L453.5,68 V83.5 H438.5 Z" fill="#fff" stroke="#8a8a8a"/>
<path d="M449,63.5 V68 H453.5" fill="#eee" stroke="#8a8a8a" stroke-width="0.8"/>
<path d="M443,67 C445,72 446,78 441,82 C444,78 449,75 451,74 C447,74 443,75 441,76" fill="none" stroke="#c0282d" stroke-width="1.1"/>
<rect x="449" y="76" width="10.5" height="10.5" rx="2" fill="#3e5f78"/>
<path d="M453,78.5 H451.5 V84 H453 M453,81.25 H457.5 M455.5,79.3 L457.5,81.25 L455.5,83.2" stroke="#fff" stroke-width="1" fill="none"/>
<path d="M477.5,72 L483.5,65.5 V69.5 H488 C493,69.5 495,72 495,75.5 C495,79 492,81.5 487,82 C490,80 491,78 491,76.5 C491,74.5 489.5,74 487,74 H483.5 V78.5 Z" fill="#78b46c" stroke="#5a9a50" stroke-width="0.8"/>
<path d="M532.5,72 L526.5,65.5 V69.5 H522 C517,69.5 515,72 515,75.5 C515,79 518,81.5 523,82 C520,80 519,78 519,76.5 C519,74.5 520.5,74 523,74 H526.5 V78.5 Z" fill="#b7d7ae" stroke="#a0c696" stroke-width="0.8"/>
<circle cx="551.4" cy="64.4" r="1.1" fill="#fff"/><circle cx="551" cy="64" r="0.9" fill="#a8a8a8"/>
<circle cx="552.9" cy="68.4" r="1.1" fill="#fff"/><circle cx="552.5" cy="68" r="0.9" fill="#a8a8a8"/>
<circle cx="551.4" cy="72.4" r="1.1" fill="#fff"/><circle cx="551" cy="72" r="0.9" fill="#a8a8a8"/>
<circle cx="552.9" cy="76.4" r="1.1" fill="#fff"/><circle cx="552.5" cy="76" r="0.9" fill="#a8a8a8"/>
<circle cx="551.4" cy="80.4" r="1.1" fill="#fff"/><circle cx="551" cy="80" r="0.9" fill="#a8a8a8"/>
<circle cx="552.9" cy="84.4" r="1.1" fill="#fff"/><circle cx="552.5" cy="84" r="0.9" fill="#a8a8a8"/>
<g fill="#5d8fc5" stroke="#3d6b9c" stroke-width="0.6"><path d="M560,63.5 H566 L563.5,66 L566,68.5 L563.5,71 L561,68.5 L560,69.5 Z"/><path d="M582.5,63.5 H576.5 L579,66 L576.5,68.5 L579,71 L581.5,68.5 L582.5,69.5Z"/><path d="M582.5,86 H576.5 L579,83.5 L576.5,81 L579,78.5 L581.5,81 L582.5,80Z"/></g>
<circle cx="571.5" cy="73.5" r="6.8" fill="#f2f2f2" fill-opacity="0.6" stroke="#888" stroke-width="1"/><path d="M566.5,78.5 L559.5,85.5" stroke="#222" stroke-width="1.2"/><path d="M565.5,79.5 L560,85" stroke="#f0c030" stroke-width="2.4"/><circle cx="567" cy="78" r="1.2" fill="#111"/>
<circle cx="611.5" cy="72.4" r="8" fill="#f6f6f6" stroke="#777" stroke-width="1"/>
<path d="M605.5,78.4 L598.5,85.4" stroke="#f0c030" stroke-width="2.6"/><circle cx="605.5" cy="78.4" r="1.3" fill="#111"/>
<path d="M606.5,72.4 H616.5" stroke="#5b8cc5" stroke-width="2.2"/>
<path d="M611.5,67.4 V77.4" stroke="#5b8cc5" stroke-width="2.2"/>
<circle cx="649.2" cy="72.4" r="8" fill="#f6f6f6" stroke="#777" stroke-width="1"/>
<path d="M643.2,78.4 L636.2,85.4" stroke="#f0c030" stroke-width="2.6"/><circle cx="643.2" cy="78.4" r="1.3" fill="#111"/>
<path d="M644.2,72.4 H654.2" stroke="#5b8cc5" stroke-width="2.2"/>
<path d="M676,73 C676,66 683,63.5 688,65.5 L690.5,67.5 L695,63.5 V72 H686.5 L689.5,69.5 C686,67.5 681,68.5 680,72 Z" fill="#4f8acb"/><path d="M694.5,76 C694.5,83 687.5,86 682.5,84 L680,82 L675.5,86 V77.5 H684 L681,80 C684.5,82 689.5,81 690.5,77.5 Z" fill="#4f8acb"/>
<circle cx="713.4" cy="64.4" r="1.1" fill="#fff"/><circle cx="713" cy="64" r="0.9" fill="#a8a8a8"/>
<circle cx="714.9" cy="68.4" r="1.1" fill="#fff"/><circle cx="714.5" cy="68" r="0.9" fill="#a8a8a8"/>
<circle cx="713.4" cy="72.4" r="1.1" fill="#fff"/><circle cx="713" cy="72" r="0.9" fill="#a8a8a8"/>
<circle cx="714.9" cy="76.4" r="1.1" fill="#fff"/><circle cx="714.5" cy="76" r="0.9" fill="#a8a8a8"/>
<circle cx="713.4" cy="80.4" r="1.1" fill="#fff"/><circle cx="713" cy="80" r="0.9" fill="#a8a8a8"/>
<circle cx="714.9" cy="84.4" r="1.1" fill="#fff"/><circle cx="714.5" cy="84" r="0.9" fill="#a8a8a8"/>
<path d="M722.5,64.5 H739.5 V85 H722.5 C720,85 720,82 722,82 V67 C720,67 720,64.5 722.5,64.5Z" fill="#f4f4f4" stroke="#8a8a8a"/><rect x="725" y="67" width="4" height="16" fill="#dcdcdc"/>
<rect x="734" y="77" width="10" height="10" rx="2" fill="#4f8a4f"/>
<path d="M739,79 V85 M736,82 H742" stroke="#fff" stroke-width="2"/>
<path d="M759.5,63.5 H770 L774.5,68 V84.5 H759.5 Z" fill="#fff" stroke="#8a8a8a"/>
<path d="M770,63.5 V68 H774.5" fill="#eee" stroke="#8a8a8a" stroke-width="0.8"/>
<rect x="760.5" y="70" width="13" height="10" fill="#79b6e8" stroke="#444"/><path d="M761,79.5 L765,74.5 L770,77 L773,76 V79.5 H761Z" fill="#c8a838"/>
<rect x="772" y="77" width="10" height="10" rx="2" fill="#4f8a4f"/>
<path d="M777,79 V85 M774,82 H780" stroke="#fff" stroke-width="2"/>
<rect x="797.5" y="64.5" width="18" height="16" fill="#dde8f2" stroke="#8a8a8a"/><text x="806.5" y="77" font-family="Liberation Serif" font-size="13" text-anchor="middle" fill="#333">T</text>
<rect x="810" y="77" width="10" height="10" rx="2" fill="#4f8a4f"/>
<path d="M815,79 V85 M812,82 H818" stroke="#fff" stroke-width="2"/>
<rect x="835.5" y="66.5" width="4" height="4" fill="#f2e000" stroke="#888" stroke-width="0.6"/><rect x="835.5" y="72.5" width="4" height="4" fill="#e05050" stroke="#888" stroke-width="0.6"/><rect x="835.5" y="78.5" width="4" height="4" fill="#8cce8c" stroke="#888" stroke-width="0.6"/><g stroke="#888" stroke-width="1.3"><line x1="841" y1="69" x2="845.5" y2="69"/><line x1="841" y1="75" x2="845.5" y2="75"/><line x1="841" y1="81" x2="845.5" y2="81"/></g>
<rect x="848" y="77" width="10" height="10" rx="2" fill="#4f8a4f"/>
<path d="M853,79 V85 M850,82 H856" stroke="#fff" stroke-width="2"/>
<rect x="873" y="71" width="22" height="4" fill="#555"/><rect x="874" y="72" width="20" height="2" fill="#999"/><rect x="876" y="72" width="3" height="2" fill="#fff"/><rect x="884" y="72" width="3" height="2" fill="#fff"/>
<rect x="886" y="77" width="10" height="10" rx="2" fill="#4f8a4f"/>
<path d="M891,79 V85 M888,82 H894" stroke="#fff" stroke-width="2"/>
<rect x="910.5" y="73.5" width="16" height="13" fill="#c5e2f7" stroke="#7fa5c5"/><circle cx="926" cy="75" r="7" fill="#f7b8b8" stroke="#d86868" stroke-width="0.8"/><path d="M920.5,64 L912,78.5 H929Z" fill="#c2f2c2" stroke="#5daa5d" stroke-width="0.8"/><path d="M930,82 H936 L933,86Z" fill="#222"/>
<path d="M952,84.5 L970,65.5" stroke="#444" stroke-width="1"/><path d="M971,64 L964,67 L968,71Z" fill="#fff" stroke="#444" stroke-width="0.8"/><path d="M954,80 L951.5,85 L957,83" fill="none" stroke="#444" stroke-width="0.8"/>
<rect x="988.5" y="65.5" width="19" height="19" fill="#fff" stroke="#3d6585" stroke-width="1.2"/><rect x="989" y="66" width="18" height="4" fill="#c7dff2"/><g stroke="#3d6585" stroke-width="1"><line x1="990" y1="68" x2="993" y2="68"/><line x1="995" y1="68" x2="1006" y2="68"/><line x1="989" y1="70.5" x2="1007" y2="70.5"/><line x1="990" y1="73" x2="993" y2="73"/><line x1="996" y1="73" x2="1006" y2="73"/><line x1="990" y1="76" x2="993" y2="76"/><line x1="996" y1="76" x2="1006" y2="76"/><line x1="990" y1="79" x2="993" y2="79"/><line x1="996" y1="79" x2="1006" y2="79"/><line x1="990" y1="82" x2="993" y2="82"/><line x1="996" y1="82" x2="1006" y2="82"/></g>
<rect x="1025.5" y="64.5" width="19" height="17" fill="#dde8f2" stroke="#8a8a8a"/><text x="1035" y="73.5" font-family="Liberation Mono" font-size="8" text-anchor="middle" fill="#333">&lt;/&gt;</text><circle cx="1028.5" cy="78.5" r="3.8" fill="#6a8fd0"/><path d="M1026,77 C1028,76 1030,78 1031,80" stroke="#5aa05a" stroke-width="1.5" fill="none"/>
<rect x="1038" y="77" width="10" height="10" rx="2" fill="#4f8a4f"/>
<path d="M1043,79 V85 M1040,82 H1046" stroke="#fff" stroke-width="2"/>
<circle cx="1063.4" cy="64.4" r="1.1" fill="#fff"/><circle cx="1063" cy="64" r="0.9" fill="#a8a8a8"/>
<circle cx="1064.9" cy="68.4" r="1.1" fill="#fff"/><circle cx="1064.5" cy="68" r="0.9" fill="#a8a8a8"/>
<circle cx="1063.4" cy="72.4" r="1.1" fill="#fff"/><circle cx="1063" cy="72" r="0.9" fill="#a8a8a8"/>
<circle cx="1064.9" cy="76.4" r="1.1" fill="#fff"/><circle cx="1064.5" cy="76" r="0.9" fill="#a8a8a8"/>
<circle cx="1063.4" cy="80.4" r="1.1" fill="#fff"/><circle cx="1063" cy="80" r="0.9" fill="#a8a8a8"/>
<circle cx="1064.9" cy="84.4" r="1.1" fill="#fff"/><circle cx="1064.5" cy="84" r="0.9" fill="#a8a8a8"/>
<defs><linearGradient id="ag" x1="0" x2="1"><stop offset="0" stop-color="#9fb5c5" stop-opacity="0"/><stop offset="0.6" stop-color="#7ea2bd"/></linearGradient><linearGradient id="ag2" x1="0" x2="1"><stop offset="0" stop-color="#34566f" stop-opacity="0"/><stop offset="0.5" stop-color="#34566f"/></linearGradient></defs><path d="M1074,72.3 H1086.5 V68 L1093,74.8 L1086.5,81.5 V77.3 H1074Z" fill="url(#ag)"/><path d="M1074,72.3 H1086.5 V68 L1093,74.8 L1086.5,81.5 V77.3 H1074" fill="none" stroke="url(#ag2)" stroke-width="0.9"/>
<rect x="1112.5" y="66.5" width="17" height="17" fill="#f2f2f2" stroke="#999"/><rect x="1116.5" y="70" width="9" height="9" fill="#c5f5c5" stroke="#5a9a5a"/><rect x="1122" y="76" width="10.5" height="10.5" rx="2" fill="#3e5f78"/><path d="M1124,81.25 H1128 V79 L1131,81.25 L1128,83.5 V81.25" fill="#fff" stroke="#fff" stroke-width="0.8"/>
<rect x="1150.5" y="74.5" width="9" height="8" fill="#c5e2f7" stroke="#4f7594"/><circle cx="1162.5" cy="72" r="5.5" fill="#c5e2f7" stroke="#4f7594"/>
<rect x="1148" y="65" width="2" height="2" fill="#000"/>
<rect x="1168" y="65" width="2" height="2" fill="#000"/>
<rect x="1148" y="83" width="2" height="2" fill="#000"/>
<rect x="1168" y="83" width="2" height="2" fill="#000"/>
<rect x="1188.5" y="73.5" width="10" height="9" fill="#f2ee9c" stroke="#999"/><circle cx="1200.5" cy="71.5" r="5.5" fill="#c5e2f7" stroke="#4f7594"/>
<rect x="1193" y="65" width="2" height="2" fill="#000"/>
<rect x="1206" y="65" width="2" height="2" fill="#000"/>
<rect x="1186" y="71" width="2" height="2" fill="#000"/>
<rect x="1206" y="78" width="2" height="2" fill="#000"/>
<rect x="1186" y="83" width="2" height="2" fill="#000"/>
<rect x="1200" y="83" width="2" height="2" fill="#000"/>
<rect x="1193" y="78" width="2" height="2" fill="#000"/>
<rect x="1224.5" y="72.5" width="15" height="12" fill="#c5e2f7" stroke="#7fa5c5"/><rect x="1229.5" y="65.5" width="15" height="12" fill="#f2ee9c" stroke="#8a8a8a"/><path d="M1242,82 H1248 L1245,86Z" fill="#333"/>
<line x1="1263.5" y1="66" x2="1263.5" y2="84" stroke="#333" stroke-width="1"/><rect x="1265.5" y="64.5" width="13" height="10" fill="#c5e2f7" stroke="#7fa5c5"/><rect x="1265.5" y="76.5" width="11" height="8" fill="#c5f5c5" stroke="#7fbf7f"/><path d="M1280,82 H1286 L1283,86Z" fill="#333"/>
</svg>
<!-- command history dock -->
<div class="dtitle" style="left:1039px;top:93px;width:403px;height:26px;line-height:25px;padding-left:19px">Command history</div>
<div class="xcl" style="left:1042px;top:98px"><svg width="14" height="14" style="position:absolute;left:0;top:0"><path d="M4.3,4.3 L9.7,9.7 M9.7,4.3 L4.3,9.7" stroke="#fff" stroke-width="2.2" stroke-linecap="round"/></svg></div>
<div class="a" style="left:1040px;top:119px;width:402px;height:137px;background:#fff;border-bottom:1px solid #c8c8c8"></div>
<div class="li" style="left:1045px;top:119px">Change item position</div>
<div class="li" style="left:1045px;top:134px">Change item position</div>
<div class="li" style="left:1045px;top:149px">Label added</div>
<div class="li" style="left:1045px;top:164px">Change item position</div>
<div class="li" style="left:1045px;top:179px">Label text changed</div>
<div class="li" style="left:1045px;top:194px">Label font changed</div>
<div class="li" style="left:1045px;top:209px">Label font changed</div>
<div class="li" style="left:1045px;top:224px">Change item position</div>
<div class="a" style="left:1040px;top:240px;width:386px;height:15px;background:#3875d7"></div>
<div class="li" style="left:1045px;top:239px;color:#fff">Change item position</div>
<div class="a" style="left:1426px;top:119px;width:16px;height:137px;background:linear-gradient(90deg,#f2f2f2,#fbfbfb);border-left:1px solid #e5e5e5"></div>
<div class="a" style="left:1431px;top:185px;width:7px;height:69px;border-radius:4px;background:#c3c3c3"></div>
<!-- tabs -->
<div class="a" style="left:1040px;top:268px;width:402px;height:1px;background:#b8b8b8"></div>
<div class="a" style="left:1079px;top:259px;width:324px;height:20px;border:1px solid #a6a6a6;border-radius:4px;background:linear-gradient(#fefefe,#ececec);overflow:hidden">
  <div class="a" style="left:0;top:0;width:93px;height:18px;text-align:center;line-height:17px">Composition</div>
  <div class="a" style="left:93px;top:0;width:114px;height:18px;background:linear-gradient(#989898,#838383);border-left:1px solid #777;border-right:1px solid #777;color:#fff;text-align:center;line-height:17px">Item Properties</div>
  <div class="a" style="left:207px;top:0;width:116px;height:18px;text-align:center;line-height:17px">Atlas generation</div>
</div>
<!-- item properties dock -->
<div class="dtitle" style="left:1039px;top:279px;width:403px;height:25px;line-height:25px;padding-left:19px">Item Properties</div>
<div class="xcl" style="left:1042px;top:284px"><svg width="14" height="14" style="position:absolute;left:0;top:0"><path d="M4.3,4.3 L9.7,9.7 M9.7,4.3 L4.3,9.7" stroke="#fff" stroke-width="2.2" stroke-linecap="round"/></svg></div>
<div class="a" style="left:1039px;top:304px;width:403px;height:19px;background:linear-gradient(#cfcfcf,#c4c4c4);border-bottom:1px solid #aaa;font-weight:bold;font-size:13px;line-height:18px;padding-left:5px">Map</div>
<div class="a" style="left:1428px;top:323px;width:14px;height:509px;background:linear-gradient(90deg,#f2f2f2,#fbfbfb);border-left:1px solid #e0e0e0"></div>
<div class="a" style="left:1431px;top:324px;width:7px;height:395px;border-radius:4px;background:#c3c3c3"></div>
<div class="tri-d" style="left:1053px;top:335px"></div>
<div class="lab" style="left:1073px;top:331px">Main properties</div>
<div class="grp" style="left:1051px;top:350px;width:364px;height:146px"></div>
<div class="btn" style="left:1065px;top:367px;width:205px;height:20px;text-align:left;padding-left:8px;line-height:15px">Cache<svg width="8" height="12" style="position:absolute;left:190px;top:3px"><path d="M1,5 L4,1 L7,5Z M1,7 L4,11 L7,7Z" fill="#333"/></svg></div>
<div class="btn" style="left:1276px;top:366px;width:121px;height:21px;line-height:17px">Update preview</div>
<div class="lab" style="left:1063px;top:402px">Scale</div>
<div class="inp" style="left:1118px;top:400px;width:285px;height:20px">49619</div>
<div class="lab" style="left:1063px;top:429px">Rotation</div>
<div class="inp" style="left:1119px;top:428px;width:267px;height:21px;line-height:20px">0.00 degrees</div>
<div class="btn" style="left:1389px;top:428px;width:13px;height:21px"><svg width="11" height="19" style="position:absolute;left:0;top:0"><path d="M2.5,7.5 L5.5,3.5 L8.5,7.5Z M2.5,11.5 L5.5,15.5 L8.5,11.5Z" fill="#333"/></svg></div>
<div class="cb" style="left:1063px;top:456px;background:linear-gradient(#e9eef3,#cfd8e0)"><svg width="16" height="16" style="position:absolute;left:0;top:-3px"><path d="M2.5,8 L6,12 L12.5,1.5" fill="none" stroke="#222" stroke-width="2"/></svg></div>
<div class="lab" style="left:1081px;top:454px">Draw map canvas items</div>
<div class="cb" style="left:1063px;top:473px"></div>
<div class="lab" style="left:1081px;top:471px">Lock layers for map item</div>
<div class="tri-d" style="left:1053px;top:520px"></div>
<div class="lab" style="left:1073px;top:515px">Extents</div>
<div class="grp" style="left:1051px;top:534px;width:364px;height:152px"></div>
<div class="lab" style="left:1063px;top:548px">X min</div>
<div class="inp" style="left:1106px;top:546px;width:285px;height:21px">20.348</div>
<div class="lab" style="left:1063px;top:575px">Y min</div>
<div class="inp" style="left:1106px;top:573px;width:285px;height:21px">-34.095</div>
<div class="lab" style="left:1063px;top:602px">X max</div>
<div class="inp" style="left:1106px;top:600px;width:285px;height:21px">20.537</div>
<div class="lab" style="left:1063px;top:629px">Y max</div>
<div class="inp" style="left:1106px;top:627px;width:285px;height:21px">-33.962</div>
<div class="btn" style="left:1063px;top:654px;width:340px;height:21px;line-height:17px">Set to map canvas extent</div>
<div class="tri-r" style="left:1056px;top:708px"></div>
<div class="cb" style="left:1073px;top:706px"></div>
<div class="lab" style="left:1094px;top:705px">Show grid</div>
<div class="tri-r" style="left:1056px;top:737px"></div>
<div class="lab" style="left:1073px;top:735px">Overview</div>
<div class="tri-r" style="left:1056px;top:770px"></div>
<div class="lab" style="left:1073px;top:768px">Position and size</div>
<div class="tri-r" style="left:1056px;top:806px"></div>
<div class="cb" style="left:1073px;top:805px"></div>
<div class="lab" style="left:1094px;top:804px">Frame</div>
<svg class="a" style="left:1428px;top:818px" width="14" height="14"><path d="M3,13 L13,3 M7,13 L13,7 M11,13 L13,11" stroke="#666" stroke-width="0.9"/></svg>

</body></html>
